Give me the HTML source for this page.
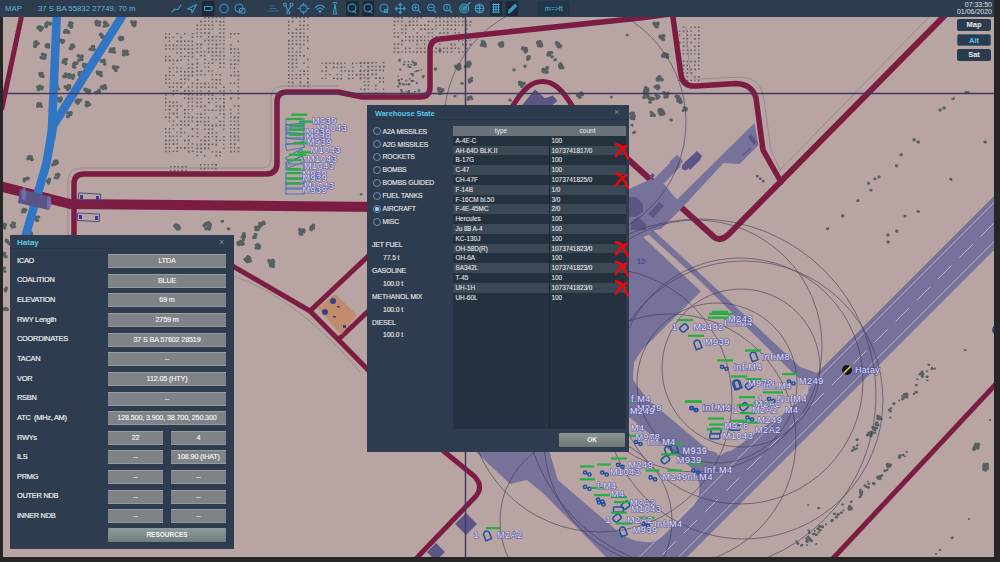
<!DOCTYPE html>
<html><head><meta charset="utf-8">
<style>
*{box-sizing:border-box}
html,body{margin:0;padding:0}
body{transform:translateZ(0);width:1000px;height:562px;overflow:hidden;position:relative;background:#262626;font-family:"Liberation Sans",sans-serif}
#map{position:absolute;left:0;top:0}
#top{position:absolute;left:0;top:0;width:994px;height:17px;background:#2d3d4f;color:#58b4d6;font-size:7.8px}
.tb{position:absolute;top:4px;white-space:nowrap}
.ib{position:absolute;top:1px;width:14px;height:15px;background:#1f2d3d;border-radius:2px}
.btn{position:absolute;left:957px;width:34px;height:12px;background:#2b3b4f;border-radius:2px;color:#e8e8e8;font-size:7.5px;font-weight:bold;text-align:center;line-height:12px}
.panel{position:absolute;background:#2d3d4f;color:#e6e6e6}
.lbl{position:absolute;left:7px;font-size:7.4px;white-space:nowrap;letter-spacing:-0.25px;line-height:9px;color:#ececec;margin-top:-0.8px;-webkit-text-stroke:0.2px #ececec}
.inp{-webkit-text-stroke:0.15px #f4f4f4;position:absolute;height:14px;background:#7f8387;border-top:1px solid #9a9ea2;border-bottom:1px solid #94989c;color:#f4f4f4;font-size:7.2px;text-align:center;line-height:12px;white-space:nowrap;letter-spacing:-0.15px}
.row{position:absolute;left:0;width:173px;height:9.8px;font-size:6.5px;line-height:9.8px;white-space:nowrap}
.row span{position:absolute;top:0}
.wl{-webkit-text-stroke:0.15px #e2e2e2;position:absolute;font-size:6.8px;color:#e2e2e2;white-space:nowrap;letter-spacing:-0.1px;line-height:9px}
.tr{-webkit-text-stroke:0.1px #e4e4e4;position:absolute;font-size:6.4px;color:#e4e4e4;white-space:nowrap;line-height:9.8px}
</style></head><body>
<svg id="map" width="1000" height="562" viewBox="0 0 1000 562">
<defs><clipPath id="mc"><rect x="3" y="17" width="991" height="540"/></clipPath>
<pattern id="dots" x="0" y="0" width="8" height="8" patternUnits="userSpaceOnUse"><rect x="1" y="1" width="1.8" height="1.6" fill="#505058"/><rect x="5" y="1" width="1.6" height="1.8" fill="#505058"/><rect x="1" y="5" width="1.7" height="1.7" fill="#505058"/><rect x="5.2" y="5" width="1.2" height="1.2" fill="#505058"/></pattern>
</defs>
<g clip-path="url(#mc)">
<rect x="0" y="0" width="1000" height="562" fill="#b7a4a3"/>
<path fill="#505258" opacity="0.85" d="M165.0 33.0h1.3v1.5h-1.3zM168.8 33.0h1.3v1.8h-1.3zM176.4 33.0h1.8v1.3h-1.8zM184.0 33.0h1.3v1.3h-1.3zM191.6 33.0h1.8v1.3h-1.8zM165.0 36.8h1.8v1.8h-1.8zM168.8 36.8h1.3v1.8h-1.3zM172.6 36.8h1.3v1.3h-1.3zM180.2 36.8h1.6v1.5h-1.6zM191.6 36.8h1.8v1.3h-1.8zM168.8 40.6h1.3v1.5h-1.3zM176.4 40.6h1.8v1.3h-1.8zM180.2 40.6h1.6v1.8h-1.6zM184.0 40.6h1.6v1.5h-1.6zM187.8 40.6h1.6v1.5h-1.6zM191.6 40.6h1.3v1.8h-1.3zM165.0 44.4h1.3v1.8h-1.3zM168.8 44.4h1.6v1.5h-1.6zM172.6 44.4h1.6v1.8h-1.6zM176.4 44.4h1.3v1.8h-1.3zM180.2 44.4h1.6v1.3h-1.6zM184.0 44.4h1.6v1.3h-1.6zM187.8 44.4h1.3v1.8h-1.3zM191.6 44.4h1.6v1.5h-1.6zM165.0 48.2h1.8v1.5h-1.8zM168.8 48.2h1.6v1.3h-1.6zM172.6 48.2h1.6v1.5h-1.6zM176.4 48.2h1.3v1.3h-1.3zM180.2 48.2h1.6v1.8h-1.6zM184.0 48.2h1.8v1.5h-1.8zM187.8 48.2h1.6v1.8h-1.6zM191.6 48.2h1.6v1.5h-1.6zM176.4 52.0h1.3v1.8h-1.3zM180.2 52.0h1.6v1.5h-1.6zM187.8 52.0h1.8v1.5h-1.8zM191.6 52.0h1.6v1.8h-1.6zM165.0 55.8h1.6v1.5h-1.6zM168.8 55.8h1.6v1.3h-1.6zM180.2 55.8h1.3v1.3h-1.3zM184.0 55.8h1.8v1.3h-1.8zM187.8 55.8h1.3v1.3h-1.3zM191.6 55.8h1.6v1.8h-1.6zM165.0 59.6h1.3v1.8h-1.3zM168.8 59.6h1.8v1.8h-1.8zM172.6 59.6h1.3v1.5h-1.3zM176.4 59.6h1.8v1.8h-1.8zM180.2 59.6h1.6v1.5h-1.6zM187.8 59.6h1.3v1.3h-1.3zM172.6 63.4h1.3v1.3h-1.3zM187.8 63.4h1.3v1.3h-1.3zM191.6 63.4h1.8v1.5h-1.8zM168.8 67.2h1.6v1.8h-1.6zM172.6 67.2h1.3v1.3h-1.3zM176.4 67.2h1.6v1.5h-1.6zM180.2 67.2h1.3v1.3h-1.3zM187.8 67.2h1.6v1.5h-1.6zM191.6 67.2h1.3v1.8h-1.3zM168.8 71.0h1.8v1.5h-1.8zM176.4 71.0h1.3v1.8h-1.3zM180.2 71.0h1.8v1.3h-1.8zM184.0 71.0h1.6v1.8h-1.6zM187.8 71.0h1.3v1.5h-1.3zM191.6 71.0h1.8v1.8h-1.8zM165.0 74.8h1.6v1.8h-1.6zM168.8 74.8h1.3v1.3h-1.3zM172.6 74.8h1.8v1.3h-1.8zM180.2 74.8h1.8v1.3h-1.8zM184.0 74.8h1.6v1.5h-1.6zM187.8 74.8h1.8v1.8h-1.8zM191.6 74.8h1.6v1.8h-1.6zM165.0 78.6h1.6v1.3h-1.6zM168.8 78.6h1.3v1.5h-1.3zM180.2 78.6h1.8v1.3h-1.8zM184.0 78.6h1.8v1.5h-1.8zM187.8 78.6h1.3v1.8h-1.3zM165.0 82.4h1.8v1.3h-1.8zM168.8 82.4h1.3v1.5h-1.3zM172.6 82.4h1.6v1.3h-1.6zM176.4 82.4h1.8v1.5h-1.8zM180.2 82.4h1.8v1.3h-1.8zM184.0 82.4h1.3v1.3h-1.3zM191.6 82.4h1.6v1.8h-1.6zM168.8 86.2h1.6v1.8h-1.6zM172.6 86.2h1.3v1.8h-1.3zM176.4 86.2h1.3v1.3h-1.3zM180.2 86.2h1.8v1.8h-1.8zM187.8 86.2h1.3v1.5h-1.3zM191.6 86.2h1.3v1.3h-1.3zM172.6 90.0h1.8v1.5h-1.8zM176.4 90.0h1.6v1.3h-1.6zM184.0 90.0h1.6v1.8h-1.6zM187.8 90.0h1.8v1.5h-1.8zM191.6 90.0h1.8v1.3h-1.8zM165.0 93.8h1.8v1.8h-1.8zM172.6 93.8h1.3v1.8h-1.3zM180.2 93.8h1.3v1.3h-1.3zM184.0 93.8h1.8v1.3h-1.8zM187.8 93.8h1.6v1.8h-1.6zM191.6 93.8h1.8v1.5h-1.8zM165.0 97.6h1.3v1.8h-1.3zM184.0 97.6h1.3v1.3h-1.3zM187.8 97.6h1.8v1.8h-1.8zM191.6 97.6h1.3v1.8h-1.3zM165.0 101.4h1.8v1.8h-1.8zM168.8 101.4h1.8v1.3h-1.8zM172.6 101.4h1.6v1.8h-1.6zM176.4 101.4h1.3v1.5h-1.3zM187.8 101.4h1.3v1.8h-1.3zM191.6 101.4h1.3v1.3h-1.3zM165.0 105.2h1.3v1.3h-1.3zM168.8 105.2h1.8v1.8h-1.8zM172.6 105.2h1.6v1.3h-1.6zM176.4 105.2h1.3v1.8h-1.3zM180.2 105.2h1.6v1.5h-1.6zM187.8 105.2h1.3v1.3h-1.3zM191.6 105.2h1.8v1.5h-1.8zM165.0 109.0h1.3v1.5h-1.3zM168.8 109.0h1.8v1.5h-1.8zM176.4 109.0h1.6v1.8h-1.6zM184.0 109.0h1.8v1.5h-1.8zM187.8 109.0h1.3v1.3h-1.3zM191.6 109.0h1.3v1.3h-1.3zM168.8 112.8h1.3v1.5h-1.3zM172.6 112.8h1.6v1.8h-1.6zM176.4 112.8h1.6v1.5h-1.6zM184.0 112.8h1.8v1.5h-1.8zM187.8 112.8h1.3v1.5h-1.3zM165.0 116.6h1.6v1.3h-1.6zM168.8 116.6h1.3v1.8h-1.3zM176.4 116.6h1.8v1.3h-1.8zM184.0 116.6h1.6v1.3h-1.6zM187.8 116.6h1.8v1.5h-1.8zM191.6 116.6h1.6v1.8h-1.6zM168.8 120.4h1.3v1.3h-1.3zM172.6 120.4h1.6v1.3h-1.6zM180.2 120.4h1.8v1.5h-1.8zM184.0 120.4h1.3v1.5h-1.3zM187.8 120.4h1.8v1.3h-1.8zM191.6 120.4h1.3v1.5h-1.3zM172.6 124.2h1.3v1.8h-1.3zM176.4 124.2h1.6v1.3h-1.6zM180.2 124.2h1.8v1.5h-1.8zM184.0 124.2h1.8v1.5h-1.8zM187.8 124.2h1.6v1.8h-1.6zM165.0 128.0h1.3v1.8h-1.3zM168.8 128.0h1.3v1.5h-1.3zM172.6 128.0h1.3v1.3h-1.3zM180.2 128.0h1.6v1.5h-1.6zM191.6 128.0h1.8v1.8h-1.8zM165.0 131.8h1.8v1.3h-1.8zM168.8 131.8h1.3v1.5h-1.3zM176.4 131.8h1.3v1.5h-1.3zM180.2 131.8h1.6v1.8h-1.6zM184.0 131.8h1.3v1.5h-1.3zM165.0 135.6h1.3v1.5h-1.3zM168.8 135.6h1.8v1.3h-1.8zM172.6 135.6h1.3v1.3h-1.3zM176.4 135.6h1.3v1.3h-1.3zM180.2 135.6h1.3v1.5h-1.3zM187.8 135.6h1.3v1.3h-1.3zM191.6 135.6h1.8v1.3h-1.8zM165.0 139.4h1.8v1.8h-1.8zM168.8 139.4h1.6v1.8h-1.6zM172.6 139.4h1.3v1.5h-1.3zM176.4 139.4h1.8v1.3h-1.8zM184.0 139.4h1.8v1.8h-1.8zM187.8 139.4h1.8v1.8h-1.8zM165.0 143.2h1.8v1.8h-1.8zM168.8 143.2h1.3v1.8h-1.3zM172.6 143.2h1.8v1.8h-1.8zM176.4 143.2h1.8v1.3h-1.8zM187.8 143.2h1.3v1.5h-1.3zM191.6 143.2h1.8v1.3h-1.8zM165.0 147.0h1.8v1.8h-1.8zM168.8 147.0h1.6v1.5h-1.6zM176.4 147.0h1.8v1.8h-1.8zM180.2 147.0h1.3v1.8h-1.3zM184.0 147.0h1.8v1.8h-1.8zM187.8 147.0h1.3v1.5h-1.3zM191.6 147.0h1.3v1.3h-1.3zM165.0 150.8h1.6v1.5h-1.6zM168.8 150.8h1.3v1.5h-1.3zM172.6 150.8h1.6v1.3h-1.6zM176.4 150.8h1.8v1.3h-1.8zM187.8 150.8h1.8v1.8h-1.8zM191.6 150.8h1.8v1.3h-1.8zM204.1 17.0h1.8v1.3h-1.8zM207.9 17.0h1.8v1.5h-1.8zM211.7 17.0h1.8v1.5h-1.8zM215.5 17.0h1.6v1.3h-1.6zM219.3 17.0h1.8v1.3h-1.8zM223.1 17.0h1.3v1.5h-1.3zM200.3 20.8h1.8v1.5h-1.8zM204.1 20.8h1.6v1.3h-1.6zM207.9 20.8h1.3v1.3h-1.3zM211.7 20.8h1.3v1.8h-1.3zM215.5 20.8h1.6v1.3h-1.6zM219.3 20.8h1.8v1.8h-1.8zM223.1 20.8h1.3v1.8h-1.3zM196.5 24.6h1.6v1.5h-1.6zM200.3 24.6h1.3v1.3h-1.3zM204.1 24.6h1.8v1.5h-1.8zM207.9 24.6h1.8v1.3h-1.8zM211.7 24.6h1.6v1.5h-1.6zM219.3 24.6h1.6v1.5h-1.6zM223.1 24.6h1.3v1.3h-1.3zM196.5 28.4h1.8v1.5h-1.8zM200.3 28.4h1.3v1.5h-1.3zM204.1 28.4h1.8v1.3h-1.8zM207.9 28.4h1.6v1.5h-1.6zM211.7 28.4h1.6v1.3h-1.6zM219.3 28.4h1.8v1.3h-1.8zM223.1 28.4h1.6v1.5h-1.6zM196.5 32.2h1.3v1.5h-1.3zM200.3 32.2h1.6v1.3h-1.6zM204.1 32.2h1.8v1.5h-1.8zM207.9 32.2h1.8v1.8h-1.8zM219.3 32.2h1.6v1.5h-1.6zM223.1 32.2h1.3v1.8h-1.3zM196.5 36.0h1.6v1.3h-1.6zM200.3 36.0h1.8v1.3h-1.8zM207.9 36.0h1.6v1.5h-1.6zM211.7 36.0h1.8v1.8h-1.8zM215.5 36.0h1.8v1.3h-1.8zM219.3 36.0h1.8v1.8h-1.8zM223.1 36.0h1.3v1.8h-1.3zM204.1 39.8h1.6v1.8h-1.6zM207.9 39.8h1.6v1.5h-1.6zM211.7 39.8h1.8v1.3h-1.8zM215.5 39.8h1.3v1.5h-1.3zM219.3 39.8h1.6v1.3h-1.6zM223.1 39.8h1.8v1.3h-1.8zM196.5 43.6h1.8v1.5h-1.8zM200.3 43.6h1.8v1.8h-1.8zM207.9 43.6h1.3v1.5h-1.3zM211.7 43.6h1.6v1.3h-1.6zM215.5 43.6h1.8v1.8h-1.8zM219.3 43.6h1.3v1.3h-1.3zM223.1 43.6h1.3v1.5h-1.3zM196.5 47.4h1.6v1.5h-1.6zM200.3 47.4h1.3v1.3h-1.3zM207.9 47.4h1.6v1.8h-1.6zM211.7 47.4h1.3v1.5h-1.3zM215.5 47.4h1.8v1.5h-1.8zM219.3 47.4h1.3v1.3h-1.3zM223.1 47.4h1.3v1.8h-1.3zM196.5 51.2h1.3v1.8h-1.3zM200.3 51.2h1.6v1.3h-1.6zM204.1 51.2h1.3v1.3h-1.3zM207.9 51.2h1.3v1.8h-1.3zM211.7 51.2h1.8v1.8h-1.8zM215.5 51.2h1.3v1.8h-1.3zM219.3 51.2h1.8v1.5h-1.8zM223.1 51.2h1.3v1.3h-1.3zM200.3 55.0h1.8v1.3h-1.8zM204.1 55.0h1.3v1.8h-1.3zM211.7 55.0h1.6v1.5h-1.6zM215.5 55.0h1.8v1.3h-1.8zM219.3 55.0h1.3v1.8h-1.3zM223.1 55.0h1.6v1.8h-1.6zM196.5 58.8h1.3v1.3h-1.3zM204.1 58.8h1.8v1.5h-1.8zM211.7 58.8h1.6v1.5h-1.6zM215.5 58.8h1.3v1.8h-1.3zM219.3 58.8h1.6v1.5h-1.6zM223.1 58.8h1.3v1.3h-1.3zM196.5 62.6h1.8v1.8h-1.8zM204.1 62.6h1.3v1.5h-1.3zM207.9 62.6h1.3v1.3h-1.3zM211.7 62.6h1.6v1.5h-1.6zM219.3 62.6h1.8v1.3h-1.8zM223.1 62.6h1.6v1.5h-1.6zM196.5 66.4h1.3v1.8h-1.3zM204.1 66.4h1.3v1.3h-1.3zM207.9 66.4h1.3v1.5h-1.3zM219.3 66.4h1.8v1.5h-1.8zM223.1 66.4h1.3v1.3h-1.3zM196.5 70.2h1.3v1.8h-1.3zM200.3 70.2h1.8v1.5h-1.8zM207.9 70.2h1.6v1.5h-1.6zM211.7 70.2h1.6v1.3h-1.6zM196.5 74.0h1.3v1.8h-1.3zM200.3 74.0h1.3v1.5h-1.3zM204.1 74.0h1.6v1.5h-1.6zM211.7 74.0h1.3v1.5h-1.3zM215.5 74.0h1.6v1.3h-1.6zM219.3 74.0h1.8v1.5h-1.8zM196.5 79.0h1.8v1.5h-1.8zM211.7 79.0h1.6v1.3h-1.6zM215.5 79.0h1.8v1.5h-1.8zM219.3 79.0h1.6v1.8h-1.6zM196.5 82.8h1.8v1.5h-1.8zM200.3 82.8h1.6v1.3h-1.6zM204.1 82.8h1.8v1.8h-1.8zM207.9 82.8h1.3v1.3h-1.3zM211.7 82.8h1.3v1.5h-1.3zM215.5 82.8h1.6v1.5h-1.6zM219.3 82.8h1.6v1.5h-1.6zM196.5 86.6h1.3v1.8h-1.3zM200.3 86.6h1.8v1.3h-1.8zM204.1 86.6h1.6v1.5h-1.6zM207.9 86.6h1.8v1.3h-1.8zM211.7 86.6h1.6v1.3h-1.6zM215.5 86.6h1.3v1.8h-1.3zM223.1 86.6h1.6v1.3h-1.6zM196.5 90.4h1.3v1.3h-1.3zM200.3 90.4h1.3v1.3h-1.3zM207.9 90.4h1.8v1.5h-1.8zM219.3 90.4h1.8v1.3h-1.8zM223.1 90.4h1.8v1.3h-1.8zM196.5 94.2h1.6v1.5h-1.6zM200.3 94.2h1.6v1.5h-1.6zM204.1 94.2h1.6v1.3h-1.6zM207.9 94.2h1.3v1.3h-1.3zM211.7 94.2h1.6v1.8h-1.6zM223.1 94.2h1.3v1.8h-1.3zM196.5 98.0h1.8v1.3h-1.8zM200.3 98.0h1.3v1.3h-1.3zM207.9 98.0h1.3v1.5h-1.3zM211.7 98.0h1.3v1.5h-1.3zM215.5 98.0h1.3v1.3h-1.3zM219.3 98.0h1.8v1.3h-1.8zM223.1 98.0h1.6v1.8h-1.6zM196.5 101.8h1.6v1.8h-1.6zM200.3 101.8h1.8v1.3h-1.8zM207.9 101.8h1.8v1.5h-1.8zM215.5 101.8h1.3v1.3h-1.3zM223.1 101.8h1.8v1.8h-1.8zM196.5 105.6h1.3v1.3h-1.3zM200.3 105.6h1.6v1.8h-1.6zM204.1 105.6h1.8v1.5h-1.8zM215.5 105.6h1.6v1.3h-1.6zM219.3 105.6h1.6v1.8h-1.6zM223.1 105.6h1.8v1.8h-1.8zM204.1 109.4h1.6v1.5h-1.6zM207.9 109.4h1.6v1.3h-1.6zM211.7 109.4h1.8v1.5h-1.8zM215.5 109.4h1.3v1.5h-1.3zM219.3 109.4h1.6v1.8h-1.6zM223.1 109.4h1.3v1.5h-1.3zM196.5 113.2h1.6v1.3h-1.6zM200.3 113.2h1.6v1.8h-1.6zM204.1 113.2h1.6v1.3h-1.6zM219.3 113.2h1.6v1.3h-1.6zM223.1 113.2h1.6v1.8h-1.6zM196.5 117.0h1.3v1.5h-1.3zM200.3 117.0h1.8v1.3h-1.8zM204.1 117.0h1.3v1.5h-1.3zM207.9 117.0h1.3v1.5h-1.3zM215.5 117.0h1.6v1.5h-1.6zM223.1 117.0h1.6v1.3h-1.6zM196.5 120.8h1.8v1.8h-1.8zM200.3 120.8h1.3v1.8h-1.3zM204.1 120.8h1.3v1.8h-1.3zM207.9 120.8h1.3v1.5h-1.3zM219.3 120.8h1.8v1.3h-1.8zM223.1 120.8h1.3v1.3h-1.3zM196.5 124.6h1.8v1.3h-1.8zM204.1 124.6h1.8v1.3h-1.8zM207.9 124.6h1.6v1.3h-1.6zM211.7 124.6h1.6v1.8h-1.6zM215.5 124.6h1.6v1.8h-1.6zM219.3 124.6h1.8v1.3h-1.8zM223.1 124.6h1.8v1.5h-1.8zM196.5 128.4h1.6v1.3h-1.6zM204.1 128.4h1.6v1.5h-1.6zM207.9 128.4h1.8v1.5h-1.8zM211.7 128.4h1.6v1.5h-1.6zM223.1 128.4h1.3v1.5h-1.3zM196.5 132.2h1.8v1.3h-1.8zM207.9 132.2h1.6v1.8h-1.6zM211.7 132.2h1.3v1.8h-1.3zM215.5 132.2h1.8v1.3h-1.8zM196.5 136.0h1.8v1.3h-1.8zM204.1 136.0h1.6v1.5h-1.6zM207.9 136.0h1.3v1.8h-1.3zM211.7 136.0h1.3v1.3h-1.3zM215.5 136.0h1.8v1.5h-1.8zM223.1 136.0h1.6v1.5h-1.6zM200.3 139.8h1.6v1.3h-1.6zM204.1 139.8h1.8v1.8h-1.8zM207.9 139.8h1.6v1.3h-1.6zM215.5 139.8h1.8v1.5h-1.8zM219.3 139.8h1.6v1.3h-1.6zM223.1 139.8h1.6v1.3h-1.6zM196.5 143.6h1.3v1.8h-1.3zM200.3 143.6h1.6v1.8h-1.6zM204.1 143.6h1.8v1.3h-1.8zM207.9 143.6h1.8v1.8h-1.8zM211.7 143.6h1.8v1.5h-1.8zM215.5 143.6h1.6v1.8h-1.6zM223.1 143.6h1.3v1.5h-1.3zM196.5 147.4h1.8v1.8h-1.8zM200.3 147.4h1.6v1.8h-1.6zM204.1 147.4h1.8v1.8h-1.8zM207.9 147.4h1.6v1.8h-1.6zM223.1 147.4h1.6v1.5h-1.6zM196.5 151.2h1.3v1.3h-1.3zM200.3 151.2h1.8v1.8h-1.8zM211.7 151.2h1.6v1.3h-1.6zM215.5 151.2h1.8v1.3h-1.8zM219.3 151.2h1.6v1.8h-1.6zM196.5 155.0h1.6v1.3h-1.6zM204.1 155.0h1.3v1.8h-1.3zM215.5 155.0h1.8v1.5h-1.8zM219.3 155.0h1.6v1.3h-1.6zM230.0 33.0h1.6v1.8h-1.6zM233.8 33.0h1.6v1.8h-1.6zM237.6 33.0h1.8v1.5h-1.8zM230.0 36.8h1.3v1.3h-1.3zM237.6 40.6h1.3v1.3h-1.3zM230.0 44.4h1.8v1.3h-1.8zM230.0 48.2h1.8v1.8h-1.8zM233.8 48.2h1.8v1.3h-1.8zM237.6 48.2h1.3v1.5h-1.3zM230.0 52.0h1.8v1.5h-1.8zM233.8 52.0h1.3v1.5h-1.3zM237.6 52.0h1.8v1.5h-1.8zM233.8 55.8h1.3v1.3h-1.3zM237.6 55.8h1.6v1.3h-1.6zM230.0 59.6h1.3v1.5h-1.3zM233.8 59.6h1.8v1.5h-1.8zM237.6 59.6h1.6v1.8h-1.6zM230.0 63.4h1.6v1.8h-1.6zM233.8 63.4h1.8v1.5h-1.8zM237.6 63.4h1.3v1.3h-1.3zM230.0 67.2h1.3v1.3h-1.3zM233.8 67.2h1.3v1.8h-1.3zM233.8 71.0h1.3v1.5h-1.3zM237.6 71.0h1.3v1.5h-1.3zM230.0 74.8h1.8v1.8h-1.8zM233.8 74.8h1.8v1.5h-1.8zM237.6 74.8h1.8v1.8h-1.8zM237.6 78.6h1.3v1.8h-1.3zM230.0 82.4h1.3v1.5h-1.3zM233.8 82.4h1.3v1.8h-1.3zM237.6 82.4h1.3v1.3h-1.3zM237.6 86.2h1.6v1.3h-1.6zM230.0 90.0h1.3v1.3h-1.3zM237.6 90.0h1.3v1.8h-1.3zM237.6 93.8h1.6v1.3h-1.6zM230.0 97.6h1.8v1.8h-1.8zM237.6 97.6h1.8v1.5h-1.8zM233.8 105.2h1.8v1.3h-1.8zM237.6 105.2h1.8v1.8h-1.8zM230.0 109.0h1.3v1.3h-1.3zM237.6 109.0h1.3v1.5h-1.3zM230.0 112.8h1.6v1.5h-1.6zM237.6 112.8h1.6v1.3h-1.6zM230.0 116.6h1.6v1.5h-1.6zM233.8 116.6h1.8v1.8h-1.8zM237.6 116.6h1.6v1.8h-1.6zM230.0 120.4h1.6v1.3h-1.6zM233.8 120.4h1.3v1.5h-1.3zM237.6 120.4h1.3v1.8h-1.3zM230.0 124.2h1.8v1.3h-1.8zM233.8 124.2h1.6v1.3h-1.6zM237.6 124.2h1.8v1.3h-1.8zM230.0 128.0h1.3v1.3h-1.3zM233.8 128.0h1.3v1.5h-1.3zM237.6 128.0h1.3v1.5h-1.3zM230.0 131.8h1.8v1.5h-1.8zM233.8 131.8h1.3v1.5h-1.3zM237.6 131.8h1.8v1.3h-1.8zM230.0 135.6h1.3v1.8h-1.3zM233.8 135.6h1.6v1.8h-1.6zM237.6 135.6h1.3v1.8h-1.3zM230.0 139.4h1.3v1.5h-1.3zM233.8 139.4h1.8v1.3h-1.8zM237.6 139.4h1.8v1.3h-1.8zM230.0 143.2h1.6v1.5h-1.6zM233.8 143.2h1.8v1.8h-1.8zM230.0 147.0h1.8v1.3h-1.8zM233.8 147.0h1.3v1.8h-1.3zM237.6 147.0h1.8v1.8h-1.8zM230.0 150.8h1.6v1.8h-1.6zM233.8 150.8h1.3v1.5h-1.3zM237.6 150.8h1.8v1.5h-1.8zM291.8 17.0h1.6v1.8h-1.6zM295.6 17.0h1.6v1.5h-1.6zM299.4 17.0h1.8v1.3h-1.8zM303.2 17.0h1.6v1.5h-1.6zM307.0 17.0h1.8v1.3h-1.8zM288.0 20.8h1.3v1.8h-1.3zM291.8 20.8h1.8v1.5h-1.8zM299.4 20.8h1.3v1.5h-1.3zM303.2 20.8h1.8v1.3h-1.8zM288.0 24.6h1.3v1.5h-1.3zM299.4 24.6h1.6v1.5h-1.6zM303.2 24.6h1.3v1.8h-1.3zM307.0 24.6h1.6v1.3h-1.6zM288.0 28.4h1.6v1.3h-1.6zM295.6 28.4h1.6v1.8h-1.6zM299.4 28.4h1.8v1.5h-1.8zM303.2 28.4h1.3v1.5h-1.3zM307.0 28.4h1.6v1.3h-1.6zM288.0 32.2h1.6v1.8h-1.6zM291.8 32.2h1.8v1.8h-1.8zM295.6 32.2h1.3v1.8h-1.3zM299.4 32.2h1.8v1.8h-1.8zM303.2 32.2h1.3v1.8h-1.3zM291.8 36.0h1.6v1.8h-1.6zM295.6 36.0h1.6v1.3h-1.6zM299.4 36.0h1.8v1.8h-1.8zM303.2 36.0h1.6v1.5h-1.6zM307.0 36.0h1.3v1.8h-1.3zM288.0 39.8h1.8v1.8h-1.8zM291.8 39.8h1.3v1.8h-1.3zM295.6 39.8h1.3v1.5h-1.3zM299.4 39.8h1.3v1.3h-1.3zM303.2 39.8h1.3v1.3h-1.3zM307.0 39.8h1.3v1.8h-1.3zM288.0 43.6h1.8v1.5h-1.8zM291.8 43.6h1.8v1.5h-1.8zM295.6 43.6h1.8v1.5h-1.8zM299.4 43.6h1.6v1.8h-1.6zM303.2 43.6h1.3v1.8h-1.3zM288.0 47.4h1.3v1.8h-1.3zM291.8 47.4h1.6v1.8h-1.6zM299.4 47.4h1.6v1.3h-1.6zM307.0 47.4h1.6v1.8h-1.6zM288.0 51.2h1.6v1.8h-1.6zM291.8 51.2h1.3v1.5h-1.3zM295.6 51.2h1.8v1.3h-1.8zM299.4 51.2h1.6v1.5h-1.6zM288.0 55.0h1.8v1.3h-1.8zM291.8 55.0h1.8v1.8h-1.8zM295.6 55.0h1.3v1.5h-1.3zM299.4 55.0h1.6v1.5h-1.6zM303.2 55.0h1.8v1.8h-1.8zM288.0 58.8h1.6v1.3h-1.6zM291.8 58.8h1.6v1.8h-1.6zM295.6 58.8h1.6v1.8h-1.6zM307.0 58.8h1.6v1.5h-1.6zM288.0 62.6h1.6v1.5h-1.6zM291.8 62.6h1.6v1.8h-1.6zM295.6 62.6h1.8v1.5h-1.8zM303.2 62.6h1.6v1.3h-1.6zM288.0 66.4h1.6v1.3h-1.6zM291.8 66.4h1.6v1.8h-1.6zM295.6 66.4h1.8v1.3h-1.8zM307.0 66.4h1.8v1.3h-1.8zM288.0 70.2h1.3v1.3h-1.3zM291.8 70.2h1.6v1.3h-1.6zM299.4 70.2h1.8v1.3h-1.8zM303.2 70.2h1.8v1.8h-1.8zM307.0 70.2h1.3v1.8h-1.3zM288.0 74.0h1.8v1.8h-1.8zM291.8 74.0h1.3v1.5h-1.3zM295.6 74.0h1.8v1.3h-1.8zM299.4 74.0h1.6v1.8h-1.6zM303.2 74.0h1.8v1.3h-1.8zM307.0 74.0h1.3v1.3h-1.3zM288.0 77.8h1.8v1.3h-1.8zM291.8 77.8h1.3v1.8h-1.3zM295.6 77.8h1.6v1.3h-1.6zM299.4 77.8h1.8v1.3h-1.8zM307.0 77.8h1.8v1.8h-1.8zM288.0 81.6h1.6v1.5h-1.6zM291.8 81.6h1.6v1.8h-1.6zM299.4 81.6h1.8v1.8h-1.8zM307.0 81.6h1.8v1.8h-1.8zM288.0 85.4h1.6v1.3h-1.6zM291.8 85.4h1.6v1.3h-1.6zM299.4 85.4h1.8v1.3h-1.8zM303.2 85.4h1.8v1.5h-1.8zM307.0 85.4h1.8v1.8h-1.8zM321.5 62.6h1.3v1.5h-1.3zM325.3 62.6h1.6v1.5h-1.6zM329.1 62.6h1.6v1.5h-1.6zM332.9 62.6h1.6v1.5h-1.6zM336.7 62.6h1.6v1.8h-1.6zM340.5 62.6h1.3v1.8h-1.3zM344.3 62.6h1.3v1.5h-1.3zM351.9 62.6h1.3v1.8h-1.3zM355.7 62.6h1.3v1.3h-1.3zM359.5 62.6h1.8v1.5h-1.8zM363.3 62.6h1.3v1.5h-1.3zM367.1 62.6h1.3v1.3h-1.3zM325.3 66.4h1.8v1.8h-1.8zM332.9 66.4h1.8v1.8h-1.8zM336.7 66.4h1.3v1.8h-1.3zM340.5 66.4h1.8v1.8h-1.8zM344.3 66.4h1.3v1.3h-1.3zM351.9 66.4h1.8v1.3h-1.8zM367.1 66.4h1.8v1.3h-1.8zM321.5 70.2h1.3v1.5h-1.3zM325.3 70.2h1.6v1.5h-1.6zM340.5 70.2h1.8v1.3h-1.8zM344.3 70.2h1.8v1.3h-1.8zM348.1 70.2h1.6v1.8h-1.6zM351.9 70.2h1.6v1.5h-1.6zM359.5 70.2h1.8v1.8h-1.8zM363.3 70.2h1.8v1.3h-1.8zM367.1 70.2h1.6v1.8h-1.6zM325.3 74.0h1.3v1.3h-1.3zM329.1 74.0h1.6v1.3h-1.6zM336.7 74.0h1.3v1.3h-1.3zM340.5 74.0h1.3v1.5h-1.3zM348.1 74.0h1.3v1.5h-1.3zM351.9 74.0h1.3v1.3h-1.3zM355.7 74.0h1.8v1.8h-1.8zM359.5 74.0h1.3v1.8h-1.3zM363.3 74.0h1.6v1.8h-1.6zM367.1 74.0h1.6v1.5h-1.6zM321.5 77.8h1.6v1.3h-1.6zM325.3 77.8h1.3v1.3h-1.3zM332.9 77.8h1.8v1.3h-1.8zM336.7 77.8h1.6v1.8h-1.6zM340.5 77.8h1.6v1.8h-1.6zM348.1 77.8h1.8v1.8h-1.8zM351.9 77.8h1.8v1.3h-1.8zM359.5 77.8h1.6v1.8h-1.6zM367.1 77.8h1.6v1.5h-1.6zM170.0 166.0h1.6v1.5h-1.6zM173.8 166.0h1.8v1.5h-1.8zM177.6 166.0h1.3v1.8h-1.3zM181.4 166.0h1.8v1.8h-1.8zM185.2 166.0h1.8v1.8h-1.8zM170.0 169.8h1.3v1.8h-1.3zM173.8 169.8h1.8v1.5h-1.8zM177.6 169.8h1.3v1.5h-1.3zM181.4 169.8h1.6v1.8h-1.6zM185.2 169.8h1.3v1.5h-1.3zM200.0 164.0h1.3v1.5h-1.3zM203.8 164.0h1.6v1.3h-1.6zM207.6 164.0h1.3v1.5h-1.3zM211.4 164.0h1.8v1.3h-1.8zM215.2 164.0h1.8v1.8h-1.8zM200.0 167.8h1.6v1.5h-1.6zM203.8 167.8h1.8v1.8h-1.8zM207.6 167.8h1.6v1.3h-1.6zM211.4 167.8h1.8v1.3h-1.8zM215.2 167.8h1.3v1.8h-1.3zM393.6 17.0h1.8v1.3h-1.8zM397.4 17.0h1.8v1.3h-1.8zM401.2 17.0h1.6v1.8h-1.6zM408.8 17.0h1.3v1.3h-1.3zM412.6 17.0h1.8v1.5h-1.8zM416.4 17.0h1.8v1.5h-1.8zM420.2 17.0h1.8v1.3h-1.8zM435.4 17.0h1.6v1.8h-1.6zM439.2 17.0h1.6v1.8h-1.6zM443.0 17.0h1.3v1.3h-1.3zM446.8 17.0h1.6v1.5h-1.6zM450.6 17.0h1.6v1.8h-1.6zM454.4 17.0h1.3v1.3h-1.3zM458.2 17.0h1.3v1.5h-1.3zM462.0 17.0h1.8v1.3h-1.8zM393.6 20.8h1.8v1.5h-1.8zM397.4 20.8h1.3v1.5h-1.3zM401.2 20.8h1.6v1.5h-1.6zM408.8 20.8h1.8v1.8h-1.8zM412.6 20.8h1.6v1.3h-1.6zM416.4 20.8h1.3v1.5h-1.3zM427.8 20.8h1.8v1.5h-1.8zM431.6 20.8h1.3v1.8h-1.3zM435.4 20.8h1.3v1.8h-1.3zM439.2 20.8h1.6v1.5h-1.6zM443.0 20.8h1.8v1.3h-1.8zM446.8 20.8h1.8v1.8h-1.8zM450.6 20.8h1.6v1.3h-1.6zM454.4 20.8h1.3v1.8h-1.3zM458.2 20.8h1.3v1.5h-1.3zM462.0 20.8h1.3v1.8h-1.3zM465.8 20.8h1.3v1.5h-1.3zM469.6 20.8h1.8v1.8h-1.8zM393.6 24.6h1.6v1.3h-1.6zM401.2 24.6h1.3v1.3h-1.3zM405.0 24.6h1.6v1.8h-1.6zM408.8 24.6h1.8v1.3h-1.8zM412.6 24.6h1.6v1.5h-1.6zM416.4 24.6h1.6v1.5h-1.6zM420.2 24.6h1.6v1.3h-1.6zM424.0 24.6h1.8v1.3h-1.8zM427.8 24.6h1.3v1.3h-1.3zM435.4 24.6h1.3v1.8h-1.3zM439.2 24.6h1.8v1.3h-1.8zM443.0 24.6h1.3v1.5h-1.3zM446.8 24.6h1.8v1.3h-1.8zM450.6 24.6h1.6v1.5h-1.6zM454.4 24.6h1.6v1.3h-1.6zM458.2 24.6h1.3v1.5h-1.3zM462.0 24.6h1.3v1.3h-1.3zM465.8 24.6h1.8v1.3h-1.8zM469.6 24.6h1.3v1.5h-1.3zM393.6 28.4h1.3v1.3h-1.3zM401.2 28.4h1.6v1.5h-1.6zM405.0 28.4h1.6v1.5h-1.6zM412.6 28.4h1.6v1.3h-1.6zM420.2 28.4h1.8v1.8h-1.8zM424.0 28.4h1.8v1.5h-1.8zM427.8 28.4h1.3v1.5h-1.3zM431.6 28.4h1.6v1.5h-1.6zM435.4 28.4h1.3v1.3h-1.3zM443.0 28.4h1.3v1.3h-1.3zM446.8 28.4h1.6v1.3h-1.6zM450.6 28.4h1.3v1.5h-1.3zM454.4 28.4h1.6v1.8h-1.6zM465.8 28.4h1.8v1.5h-1.8zM393.6 32.2h1.6v1.3h-1.6zM397.4 32.2h1.3v1.3h-1.3zM401.2 32.2h1.8v1.3h-1.8zM405.0 32.2h1.3v1.8h-1.3zM416.4 32.2h1.6v1.5h-1.6zM427.8 32.2h1.8v1.3h-1.8zM431.6 32.2h1.3v1.3h-1.3zM439.2 32.2h1.6v1.8h-1.6zM443.0 32.2h1.8v1.5h-1.8zM446.8 32.2h1.8v1.5h-1.8zM454.4 32.2h1.6v1.3h-1.6zM458.2 32.2h1.6v1.3h-1.6zM465.8 32.2h1.6v1.3h-1.6zM393.6 36.0h1.8v1.3h-1.8zM397.4 36.0h1.6v1.8h-1.6zM405.0 36.0h1.3v1.5h-1.3zM408.8 36.0h1.6v1.8h-1.6zM412.6 36.0h1.3v1.5h-1.3zM416.4 36.0h1.8v1.5h-1.8zM420.2 36.0h1.3v1.8h-1.3zM424.0 36.0h1.3v1.3h-1.3zM427.8 36.0h1.3v1.3h-1.3zM431.6 36.0h1.3v1.3h-1.3zM435.4 36.0h1.8v1.3h-1.8zM443.0 36.0h1.8v1.3h-1.8zM446.8 36.0h1.8v1.8h-1.8zM450.6 36.0h1.8v1.3h-1.8zM454.4 36.0h1.3v1.5h-1.3zM458.2 36.0h1.8v1.3h-1.8zM469.6 36.0h1.8v1.5h-1.8zM401.2 39.8h1.8v1.8h-1.8zM405.0 39.8h1.3v1.3h-1.3zM408.8 39.8h1.6v1.8h-1.6zM412.6 39.8h1.3v1.8h-1.3zM416.4 39.8h1.6v1.8h-1.6zM420.2 39.8h1.8v1.3h-1.8zM424.0 39.8h1.3v1.5h-1.3zM427.8 39.8h1.3v1.5h-1.3zM431.6 39.8h1.8v1.5h-1.8zM435.4 39.8h1.8v1.3h-1.8zM439.2 39.8h1.3v1.8h-1.3zM443.0 39.8h1.3v1.5h-1.3zM446.8 39.8h1.3v1.5h-1.3zM458.2 39.8h1.3v1.8h-1.3zM462.0 39.8h1.3v1.3h-1.3zM465.8 39.8h1.6v1.5h-1.6zM469.6 39.8h1.3v1.3h-1.3zM393.6 43.6h1.8v1.5h-1.8zM397.4 43.6h1.8v1.5h-1.8zM401.2 43.6h1.3v1.8h-1.3zM416.4 43.6h1.3v1.5h-1.3zM424.0 43.6h1.3v1.3h-1.3zM431.6 43.6h1.8v1.5h-1.8zM439.2 43.6h1.3v1.5h-1.3zM450.6 43.6h1.6v1.8h-1.6zM454.4 43.6h1.3v1.8h-1.3zM462.0 43.6h1.6v1.8h-1.6zM465.8 43.6h1.3v1.8h-1.3zM469.6 43.6h1.8v1.8h-1.8zM393.6 47.4h1.8v1.5h-1.8zM397.4 47.4h1.6v1.5h-1.6zM405.0 47.4h1.3v1.8h-1.3zM408.8 47.4h1.8v1.5h-1.8zM416.4 47.4h1.3v1.5h-1.3zM420.2 47.4h1.6v1.5h-1.6zM424.0 47.4h1.3v1.5h-1.3zM435.4 47.4h1.8v1.5h-1.8zM439.2 47.4h1.3v1.8h-1.3zM443.0 47.4h1.6v1.5h-1.6zM446.8 47.4h1.3v1.8h-1.3zM450.6 47.4h1.8v1.8h-1.8zM454.4 47.4h1.6v1.5h-1.6zM458.2 47.4h1.3v1.8h-1.3zM465.8 47.4h1.6v1.8h-1.6zM393.6 51.2h1.6v1.5h-1.6zM397.4 51.2h1.8v1.8h-1.8zM401.2 51.2h1.3v1.5h-1.3zM405.0 51.2h1.3v1.5h-1.3zM408.8 51.2h1.8v1.3h-1.8zM412.6 51.2h1.8v1.3h-1.8zM416.4 51.2h1.6v1.8h-1.6zM420.2 51.2h1.6v1.5h-1.6zM424.0 51.2h1.6v1.8h-1.6zM427.8 51.2h1.6v1.5h-1.6zM431.6 51.2h1.8v1.5h-1.8zM435.4 51.2h1.3v1.8h-1.3zM439.2 51.2h1.6v1.5h-1.6zM443.0 51.2h1.3v1.8h-1.3zM446.8 51.2h1.3v1.5h-1.3zM450.6 51.2h1.8v1.3h-1.8zM458.2 51.2h1.6v1.8h-1.6zM462.0 51.2h1.6v1.3h-1.6zM465.8 51.2h1.3v1.3h-1.3zM360.0 62.0h1.6v1.5h-1.6zM363.8 62.0h1.6v1.8h-1.6zM367.6 62.0h1.6v1.8h-1.6zM371.4 62.0h1.8v1.8h-1.8zM375.2 62.0h1.6v1.5h-1.6zM382.8 62.0h1.6v1.3h-1.6zM360.0 65.8h1.8v1.3h-1.8zM367.6 65.8h1.6v1.8h-1.6zM371.4 65.8h1.8v1.3h-1.8zM375.2 65.8h1.6v1.5h-1.6zM379.0 65.8h1.8v1.8h-1.8zM382.8 65.8h1.8v1.8h-1.8zM360.0 69.6h1.3v1.5h-1.3zM363.8 69.6h1.3v1.5h-1.3zM367.6 69.6h1.3v1.8h-1.3zM371.4 69.6h1.8v1.5h-1.8zM375.2 69.6h1.8v1.5h-1.8zM379.0 69.6h1.8v1.5h-1.8zM382.8 69.6h1.3v1.8h-1.3zM360.0 73.4h1.6v1.3h-1.6zM367.6 73.4h1.3v1.5h-1.3zM371.4 73.4h1.8v1.8h-1.8zM375.2 73.4h1.8v1.5h-1.8zM360.0 77.2h1.8v1.3h-1.8zM363.8 77.2h1.6v1.3h-1.6zM367.6 77.2h1.8v1.3h-1.8zM375.2 77.2h1.8v1.8h-1.8zM379.0 77.2h1.8v1.8h-1.8zM382.8 77.2h1.3v1.8h-1.3zM363.8 81.0h1.3v1.3h-1.3zM367.6 81.0h1.8v1.3h-1.8zM379.0 81.0h1.6v1.5h-1.6zM382.8 81.0h1.3v1.8h-1.3zM363.8 84.8h1.6v1.3h-1.6zM367.6 84.8h1.6v1.5h-1.6zM375.2 84.8h1.3v1.8h-1.3zM360.0 88.6h1.3v1.3h-1.3zM363.8 88.6h1.6v1.8h-1.6zM367.6 88.6h1.3v1.5h-1.3zM375.2 88.6h1.3v1.3h-1.3zM382.8 88.6h1.3v1.5h-1.3zM363.8 92.4h1.6v1.5h-1.6zM367.6 92.4h1.6v1.5h-1.6zM371.4 92.4h1.3v1.3h-1.3zM375.2 92.4h1.8v1.8h-1.8zM379.0 92.4h1.6v1.5h-1.6zM382.8 92.4h1.8v1.5h-1.8zM682.8 26.6h1.3v1.3h-1.3zM690.4 26.6h1.3v1.5h-1.3zM694.2 26.6h1.6v1.3h-1.6zM698.0 26.6h1.6v1.5h-1.6zM679.0 30.4h1.3v1.3h-1.3zM682.8 30.4h1.6v1.8h-1.6zM686.6 30.4h1.3v1.5h-1.3zM690.4 30.4h1.3v1.5h-1.3zM698.0 30.4h1.6v1.3h-1.6zM679.0 34.2h1.3v1.3h-1.3zM686.6 34.2h1.3v1.8h-1.3zM690.4 34.2h1.3v1.3h-1.3zM694.2 34.2h1.3v1.8h-1.3zM698.0 34.2h1.8v1.8h-1.8zM682.8 38.0h1.8v1.3h-1.8zM686.6 38.0h1.6v1.8h-1.6zM694.2 38.0h1.6v1.8h-1.6zM698.0 38.0h1.8v1.5h-1.8zM679.0 41.8h1.6v1.8h-1.6zM682.8 41.8h1.3v1.3h-1.3zM686.6 41.8h1.3v1.8h-1.3zM690.4 41.8h1.8v1.5h-1.8zM698.0 41.8h1.3v1.5h-1.3zM682.8 45.6h1.8v1.3h-1.8zM686.6 45.6h1.3v1.5h-1.3zM694.2 45.6h1.3v1.8h-1.3zM698.0 45.6h1.8v1.5h-1.8zM682.8 49.4h1.3v1.3h-1.3zM686.6 49.4h1.8v1.5h-1.8zM690.4 49.4h1.6v1.5h-1.6zM694.2 49.4h1.8v1.3h-1.8zM698.0 49.4h1.3v1.3h-1.3zM679.0 53.2h1.8v1.8h-1.8zM682.8 53.2h1.6v1.3h-1.6zM686.6 53.2h1.8v1.5h-1.8zM690.4 53.2h1.6v1.5h-1.6zM694.2 53.2h1.3v1.3h-1.3zM698.0 53.2h1.6v1.8h-1.6zM679.0 57.0h1.8v1.8h-1.8zM698.0 57.0h1.6v1.8h-1.6zM682.8 60.8h1.8v1.3h-1.8zM686.6 60.8h1.3v1.8h-1.3zM690.4 60.8h1.8v1.5h-1.8zM694.2 60.8h1.8v1.8h-1.8zM698.0 60.8h1.3v1.3h-1.3zM679.0 64.6h1.8v1.5h-1.8zM682.8 64.6h1.8v1.8h-1.8zM686.6 64.6h1.3v1.8h-1.3zM694.2 64.6h1.3v1.5h-1.3zM698.0 64.6h1.3v1.5h-1.3zM679.0 68.4h1.6v1.8h-1.6zM682.8 68.4h1.3v1.5h-1.3zM686.6 68.4h1.6v1.5h-1.6zM690.4 68.4h1.6v1.8h-1.6zM694.2 68.4h1.8v1.8h-1.8zM698.0 68.4h1.8v1.3h-1.8zM679.0 72.2h1.3v1.5h-1.3zM682.8 72.2h1.3v1.5h-1.3zM686.6 72.2h1.3v1.8h-1.3zM690.4 72.2h1.8v1.5h-1.8zM679.0 76.0h1.3v1.8h-1.3zM682.8 76.0h1.3v1.3h-1.3zM686.6 76.0h1.6v1.3h-1.6zM694.2 76.0h1.3v1.8h-1.3zM698.0 76.0h1.8v1.5h-1.8zM679.0 79.8h1.3v1.3h-1.3zM682.8 79.8h1.6v1.3h-1.6zM686.6 79.8h1.6v1.8h-1.6zM690.4 79.8h1.8v1.3h-1.8zM694.2 79.8h1.3v1.5h-1.3zM698.0 79.8h1.3v1.8h-1.3z"/>
<g fill="#4f5c5d" opacity="0.92">
<circle cx="46.2" cy="26.0" r="1.8"/>
<circle cx="46.0" cy="24.0" r="1.8"/>
<circle cx="50.4" cy="23.6" r="1.8"/>
<circle cx="46.1" cy="26.4" r="1.8"/>
<circle cx="50.4" cy="24.0" r="1.8"/>
<circle cx="47.4" cy="22.9" r="1.8"/>
<circle cx="48.0" cy="24.0" r="1.8"/>
<circle cx="65.5" cy="30.7" r="1.8"/>
<circle cx="68.6" cy="32.2" r="1.8"/>
<circle cx="65.2" cy="30.7" r="1.8"/>
<circle cx="66.5" cy="30.5" r="1.8"/>
<circle cx="64.7" cy="32.3" r="1.8"/>
<circle cx="68.1" cy="32.5" r="1.8"/>
<circle cx="68.2" cy="31.7" r="1.8"/>
<circle cx="60.1" cy="40.1" r="1.8"/>
<circle cx="63.6" cy="41.0" r="1.8"/>
<circle cx="62.4" cy="42.4" r="1.8"/>
<circle cx="62.8" cy="40.9" r="1.8"/>
<circle cx="59.4" cy="40.7" r="1.8"/>
<circle cx="59.1" cy="41.1" r="1.8"/>
<circle cx="60.9" cy="40.4" r="1.8"/>
<circle cx="48.1" cy="44.9" r="1.8"/>
<circle cx="48.0" cy="44.9" r="1.8"/>
<circle cx="47.6" cy="45.0" r="1.8"/>
<circle cx="47.9" cy="45.0" r="1.8"/>
<circle cx="46.5" cy="45.4" r="1.8"/>
<circle cx="46.7" cy="46.7" r="1.8"/>
<circle cx="48.6" cy="46.9" r="1.8"/>
<circle cx="42.5" cy="54.2" r="1.8"/>
<circle cx="45.4" cy="55.1" r="1.8"/>
<circle cx="44.0" cy="57.7" r="1.8"/>
<circle cx="41.2" cy="57.6" r="1.8"/>
<circle cx="44.0" cy="58.2" r="1.8"/>
<circle cx="44.5" cy="55.1" r="1.8"/>
<circle cx="44.8" cy="57.9" r="1.8"/>
<circle cx="64.6" cy="61.6" r="1.8"/>
<circle cx="65.7" cy="63.6" r="1.8"/>
<circle cx="63.3" cy="62.4" r="1.8"/>
<circle cx="64.7" cy="59.8" r="1.8"/>
<circle cx="63.8" cy="60.6" r="1.8"/>
<circle cx="66.1" cy="59.6" r="1.8"/>
<circle cx="66.1" cy="59.7" r="1.8"/>
<circle cx="86.5" cy="66.9" r="1.8"/>
<circle cx="85.1" cy="67.2" r="1.8"/>
<circle cx="83.6" cy="64.6" r="1.8"/>
<circle cx="86.1" cy="64.9" r="1.8"/>
<circle cx="84.0" cy="66.2" r="1.8"/>
<circle cx="83.8" cy="64.6" r="1.8"/>
<circle cx="85.2" cy="65.3" r="1.8"/>
<circle cx="41.3" cy="76.1" r="1.8"/>
<circle cx="41.2" cy="74.3" r="1.8"/>
<circle cx="42.0" cy="73.5" r="1.8"/>
<circle cx="42.8" cy="76.4" r="1.8"/>
<circle cx="40.7" cy="75.4" r="1.8"/>
<circle cx="39.9" cy="73.6" r="1.8"/>
<circle cx="42.2" cy="76.0" r="1.8"/>
<circle cx="65.9" cy="76.4" r="1.8"/>
<circle cx="66.7" cy="75.1" r="1.8"/>
<circle cx="65.6" cy="74.0" r="1.8"/>
<circle cx="64.2" cy="76.7" r="1.8"/>
<circle cx="64.4" cy="76.5" r="1.8"/>
<circle cx="67.3" cy="75.2" r="1.8"/>
<circle cx="64.2" cy="76.0" r="1.8"/>
<circle cx="71.5" cy="76.3" r="1.8"/>
<circle cx="69.4" cy="74.6" r="1.8"/>
<circle cx="73.5" cy="75.3" r="1.8"/>
<circle cx="72.7" cy="78.3" r="1.8"/>
<circle cx="72.4" cy="75.7" r="1.8"/>
<circle cx="69.2" cy="77.5" r="1.8"/>
<circle cx="73.6" cy="76.0" r="1.8"/>
<circle cx="56.8" cy="86.2" r="1.8"/>
<circle cx="55.1" cy="89.0" r="1.8"/>
<circle cx="54.5" cy="87.9" r="1.8"/>
<circle cx="58.5" cy="89.0" r="1.8"/>
<circle cx="56.7" cy="85.3" r="1.8"/>
<circle cx="54.9" cy="89.0" r="1.8"/>
<circle cx="54.3" cy="87.1" r="1.8"/>
<circle cx="66.8" cy="87.0" r="1.8"/>
<circle cx="69.4" cy="88.0" r="1.8"/>
<circle cx="68.7" cy="85.5" r="1.8"/>
<circle cx="67.6" cy="89.4" r="1.8"/>
<circle cx="68.3" cy="87.1" r="1.8"/>
<circle cx="69.7" cy="85.8" r="1.8"/>
<circle cx="65.3" cy="86.9" r="1.8"/>
<circle cx="38.5" cy="89.5" r="1.8"/>
<circle cx="37.9" cy="87.1" r="1.8"/>
<circle cx="38.8" cy="88.6" r="1.8"/>
<circle cx="42.2" cy="87.4" r="1.8"/>
<circle cx="39.4" cy="87.8" r="1.8"/>
<circle cx="40.0" cy="86.4" r="1.8"/>
<circle cx="41.8" cy="88.7" r="1.8"/>
<circle cx="57.0" cy="99.4" r="1.8"/>
<circle cx="60.9" cy="98.1" r="1.8"/>
<circle cx="59.1" cy="100.9" r="1.8"/>
<circle cx="57.9" cy="98.6" r="1.8"/>
<circle cx="61.0" cy="99.6" r="1.8"/>
<circle cx="60.5" cy="101.0" r="1.8"/>
<circle cx="57.6" cy="99.0" r="1.8"/>
<circle cx="76.3" cy="102.0" r="1.8"/>
<circle cx="77.6" cy="100.0" r="1.8"/>
<circle cx="80.6" cy="100.0" r="1.8"/>
<circle cx="78.6" cy="101.5" r="1.8"/>
<circle cx="76.5" cy="100.9" r="1.8"/>
<circle cx="79.2" cy="100.5" r="1.8"/>
<circle cx="77.9" cy="103.2" r="1.8"/>
<circle cx="40.0" cy="104.5" r="1.8"/>
<circle cx="38.0" cy="104.9" r="1.8"/>
<circle cx="38.9" cy="105.6" r="1.8"/>
<circle cx="38.3" cy="103.7" r="1.8"/>
<circle cx="37.8" cy="106.2" r="1.8"/>
<circle cx="41.2" cy="106.2" r="1.8"/>
<circle cx="40.2" cy="103.8" r="1.8"/>
<circle cx="89.5" cy="90.6" r="1.8"/>
<circle cx="87.2" cy="92.3" r="1.8"/>
<circle cx="88.2" cy="92.4" r="1.8"/>
<circle cx="85.1" cy="89.3" r="1.8"/>
<circle cx="89.5" cy="92.9" r="1.8"/>
<circle cx="85.3" cy="90.1" r="1.8"/>
<circle cx="87.2" cy="90.0" r="1.8"/>
<circle cx="68.0" cy="116.7" r="1.8"/>
<circle cx="69.9" cy="114.0" r="1.8"/>
<circle cx="70.4" cy="113.1" r="1.8"/>
<circle cx="68.0" cy="113.0" r="1.8"/>
<circle cx="71.0" cy="112.7" r="1.8"/>
<circle cx="67.6" cy="116.3" r="1.8"/>
<circle cx="70.8" cy="114.5" r="1.8"/>
<circle cx="90.2" cy="49.2" r="1.8"/>
<circle cx="93.6" cy="46.6" r="1.8"/>
<circle cx="91.2" cy="49.2" r="1.8"/>
<circle cx="93.6" cy="49.6" r="1.8"/>
<circle cx="92.6" cy="46.6" r="1.8"/>
<circle cx="93.8" cy="49.2" r="1.8"/>
<circle cx="92.5" cy="48.0" r="1.8"/>
<circle cx="101.1" cy="34.2" r="1.8"/>
<circle cx="100.4" cy="34.8" r="1.8"/>
<circle cx="104.1" cy="37.1" r="1.8"/>
<circle cx="102.2" cy="35.7" r="1.8"/>
<circle cx="104.2" cy="38.1" r="1.8"/>
<circle cx="100.8" cy="34.5" r="1.8"/>
<circle cx="102.3" cy="37.3" r="1.8"/>
<circle cx="107.3" cy="25.4" r="1.8"/>
<circle cx="106.5" cy="25.1" r="1.8"/>
<circle cx="104.6" cy="22.9" r="1.8"/>
<circle cx="105.8" cy="22.7" r="1.8"/>
<circle cx="107.6" cy="24.8" r="1.8"/>
<circle cx="104.3" cy="26.3" r="1.8"/>
<circle cx="104.7" cy="22.4" r="1.8"/>
<circle cx="120.6" cy="39.8" r="1.8"/>
<circle cx="122.5" cy="37.7" r="1.8"/>
<circle cx="120.0" cy="37.6" r="1.8"/>
<circle cx="120.8" cy="38.6" r="1.8"/>
<circle cx="119.4" cy="38.4" r="1.8"/>
<circle cx="122.3" cy="37.8" r="1.8"/>
<circle cx="122.3" cy="39.2" r="1.8"/>
<circle cx="110.6" cy="50.1" r="1.8"/>
<circle cx="110.3" cy="51.5" r="1.8"/>
<circle cx="114.4" cy="52.1" r="1.8"/>
<circle cx="111.2" cy="49.1" r="1.8"/>
<circle cx="111.6" cy="50.6" r="1.8"/>
<circle cx="113.8" cy="48.8" r="1.8"/>
<circle cx="112.4" cy="51.4" r="1.8"/>
<circle cx="104.8" cy="64.1" r="1.8"/>
<circle cx="103.9" cy="61.3" r="1.8"/>
<circle cx="103.9" cy="60.4" r="1.8"/>
<circle cx="101.2" cy="60.8" r="1.8"/>
<circle cx="101.9" cy="61.3" r="1.8"/>
<circle cx="102.0" cy="61.5" r="1.8"/>
<circle cx="103.4" cy="61.4" r="1.8"/>
<circle cx="98.9" cy="72.5" r="1.8"/>
<circle cx="101.1" cy="75.7" r="1.8"/>
<circle cx="100.5" cy="74.1" r="1.8"/>
<circle cx="100.7" cy="72.5" r="1.8"/>
<circle cx="97.9" cy="73.8" r="1.8"/>
<circle cx="97.3" cy="72.1" r="1.8"/>
<circle cx="99.9" cy="73.9" r="1.8"/>
<circle cx="134.6" cy="23.6" r="1.8"/>
<circle cx="135.2" cy="22.1" r="1.8"/>
<circle cx="134.7" cy="25.1" r="1.8"/>
<circle cx="133.0" cy="24.8" r="1.8"/>
<circle cx="131.7" cy="21.7" r="1.8"/>
<circle cx="134.3" cy="25.6" r="1.8"/>
<circle cx="132.7" cy="22.9" r="1.8"/>
<circle cx="113.7" cy="67.0" r="1.8"/>
<circle cx="114.0" cy="67.2" r="1.8"/>
<circle cx="115.8" cy="67.4" r="1.8"/>
<circle cx="114.4" cy="68.6" r="1.8"/>
<circle cx="113.4" cy="67.1" r="1.8"/>
<circle cx="117.7" cy="67.2" r="1.8"/>
<circle cx="115.8" cy="70.5" r="1.8"/>
<circle cx="127.5" cy="54.2" r="1.8"/>
<circle cx="125.8" cy="52.0" r="1.8"/>
<circle cx="123.7" cy="51.3" r="1.8"/>
<circle cx="123.5" cy="54.5" r="1.8"/>
<circle cx="126.6" cy="51.8" r="1.8"/>
<circle cx="126.8" cy="51.2" r="1.8"/>
<circle cx="124.1" cy="54.8" r="1.8"/>
<circle cx="73.7" cy="46.8" r="1.8"/>
<circle cx="71.9" cy="45.3" r="1.8"/>
<circle cx="71.7" cy="45.4" r="1.8"/>
<circle cx="72.1" cy="45.8" r="1.8"/>
<circle cx="70.2" cy="48.4" r="1.8"/>
<circle cx="71.4" cy="48.6" r="1.8"/>
<circle cx="72.9" cy="45.2" r="1.8"/>
<circle cx="74.6" cy="63.4" r="1.8"/>
<circle cx="74.0" cy="66.5" r="1.8"/>
<circle cx="73.9" cy="64.3" r="1.8"/>
<circle cx="73.4" cy="66.5" r="1.8"/>
<circle cx="75.8" cy="63.8" r="1.8"/>
<circle cx="74.5" cy="67.3" r="1.8"/>
<circle cx="76.7" cy="63.1" r="1.8"/>
<circle cx="81.8" cy="56.6" r="1.8"/>
<circle cx="80.5" cy="56.6" r="1.8"/>
<circle cx="81.8" cy="59.5" r="1.8"/>
<circle cx="79.0" cy="60.2" r="1.8"/>
<circle cx="81.3" cy="59.2" r="1.8"/>
<circle cx="78.4" cy="55.9" r="1.8"/>
<circle cx="82.2" cy="56.0" r="1.8"/>
<circle cx="81.5" cy="72.5" r="1.8"/>
<circle cx="79.4" cy="73.8" r="1.8"/>
<circle cx="79.4" cy="75.0" r="1.8"/>
<circle cx="79.3" cy="72.7" r="1.8"/>
<circle cx="81.0" cy="74.0" r="1.8"/>
<circle cx="83.6" cy="73.7" r="1.8"/>
<circle cx="82.8" cy="73.2" r="1.8"/>
<circle cx="88.7" cy="104.4" r="1.8"/>
<circle cx="86.3" cy="105.3" r="1.8"/>
<circle cx="86.5" cy="102.3" r="1.8"/>
<circle cx="87.3" cy="105.8" r="1.8"/>
<circle cx="88.3" cy="102.9" r="1.8"/>
<circle cx="86.9" cy="105.1" r="1.8"/>
<circle cx="89.5" cy="104.5" r="1.8"/>
<circle cx="98.6" cy="91.8" r="1.8"/>
<circle cx="98.2" cy="92.0" r="1.8"/>
<circle cx="95.5" cy="92.7" r="1.8"/>
<circle cx="98.9" cy="92.5" r="1.8"/>
<circle cx="99.1" cy="90.2" r="1.8"/>
<circle cx="97.9" cy="91.7" r="1.8"/>
<circle cx="99.3" cy="91.7" r="1.8"/>
<circle cx="105.5" cy="88.2" r="1.8"/>
<circle cx="101.4" cy="87.1" r="1.8"/>
<circle cx="103.0" cy="86.9" r="1.8"/>
<circle cx="104.8" cy="85.6" r="1.8"/>
<circle cx="103.0" cy="88.4" r="1.8"/>
<circle cx="102.2" cy="87.2" r="1.8"/>
<circle cx="104.9" cy="87.1" r="1.8"/>
<circle cx="42.1" cy="27.7" r="1.8"/>
<circle cx="39.3" cy="27.1" r="1.8"/>
<circle cx="40.7" cy="30.2" r="1.8"/>
<circle cx="42.0" cy="27.9" r="1.8"/>
<circle cx="39.8" cy="27.1" r="1.8"/>
<circle cx="38.5" cy="28.3" r="1.8"/>
<circle cx="38.2" cy="27.6" r="1.8"/>
<circle cx="36.0" cy="41.9" r="1.8"/>
<circle cx="35.4" cy="46.4" r="1.8"/>
<circle cx="34.7" cy="46.0" r="1.8"/>
<circle cx="35.7" cy="44.3" r="1.8"/>
<circle cx="35.0" cy="42.8" r="1.8"/>
<circle cx="36.8" cy="43.6" r="1.8"/>
<circle cx="38.0" cy="43.6" r="1.8"/>
<circle cx="96.7" cy="21.4" r="1.8"/>
<circle cx="95.9" cy="22.3" r="1.8"/>
<circle cx="99.0" cy="24.8" r="1.8"/>
<circle cx="99.6" cy="22.1" r="1.8"/>
<circle cx="96.6" cy="24.8" r="1.8"/>
<circle cx="98.8" cy="23.5" r="1.8"/>
<circle cx="99.2" cy="25.2" r="1.8"/>
<circle cx="69.8" cy="22.7" r="1.8"/>
<circle cx="72.0" cy="23.2" r="1.8"/>
<circle cx="69.2" cy="25.3" r="1.8"/>
<circle cx="71.1" cy="26.1" r="1.8"/>
<circle cx="71.2" cy="27.3" r="1.8"/>
<circle cx="71.4" cy="26.2" r="1.8"/>
<circle cx="71.1" cy="23.3" r="1.8"/>
<circle cx="31.2" cy="156.8" r="1.8"/>
<circle cx="29.6" cy="158.1" r="1.8"/>
<circle cx="29.2" cy="156.9" r="1.8"/>
<circle cx="29.0" cy="157.1" r="1.8"/>
<circle cx="31.0" cy="158.9" r="1.8"/>
<circle cx="32.0" cy="159.4" r="1.8"/>
<circle cx="27.9" cy="158.7" r="1.8"/>
<circle cx="55.0" cy="163.9" r="1.8"/>
<circle cx="52.7" cy="164.8" r="1.8"/>
<circle cx="56.8" cy="161.2" r="1.8"/>
<circle cx="54.4" cy="162.1" r="1.8"/>
<circle cx="55.1" cy="161.4" r="1.8"/>
<circle cx="55.5" cy="162.8" r="1.8"/>
<circle cx="57.1" cy="162.9" r="1.8"/>
<circle cx="55.0" cy="177.7" r="1.5"/>
<circle cx="56.1" cy="174.8" r="1.5"/>
<circle cx="58.7" cy="176.0" r="1.5"/>
<circle cx="59.0" cy="174.7" r="1.5"/>
<circle cx="57.4" cy="177.9" r="1.5"/>
<circle cx="57.5" cy="175.0" r="1.5"/>
<circle cx="58.1" cy="174.1" r="1.5"/>
<circle cx="26.2" cy="178.6" r="1.6"/>
<circle cx="24.2" cy="180.9" r="1.6"/>
<circle cx="26.6" cy="179.0" r="1.6"/>
<circle cx="28.1" cy="178.4" r="1.6"/>
<circle cx="27.7" cy="178.2" r="1.6"/>
<circle cx="27.4" cy="179.0" r="1.6"/>
<circle cx="24.0" cy="179.1" r="1.6"/>
<circle cx="49.7" cy="179.7" r="1.6"/>
<circle cx="49.3" cy="179.1" r="1.6"/>
<circle cx="47.2" cy="181.1" r="1.6"/>
<circle cx="48.8" cy="182.8" r="1.6"/>
<circle cx="48.4" cy="183.0" r="1.6"/>
<circle cx="49.2" cy="180.4" r="1.6"/>
<circle cx="48.8" cy="180.0" r="1.6"/>
<circle cx="25.7" cy="209.9" r="1.6"/>
<circle cx="24.5" cy="211.8" r="1.6"/>
<circle cx="23.6" cy="210.8" r="1.6"/>
<circle cx="23.4" cy="209.2" r="1.6"/>
<circle cx="25.3" cy="209.9" r="1.6"/>
<circle cx="22.3" cy="211.8" r="1.6"/>
<circle cx="24.5" cy="210.0" r="1.6"/>
<circle cx="36.6" cy="217.5" r="1.6"/>
<circle cx="38.7" cy="217.0" r="1.6"/>
<circle cx="36.0" cy="219.2" r="1.6"/>
<circle cx="37.7" cy="220.5" r="1.6"/>
<circle cx="36.6" cy="217.2" r="1.6"/>
<circle cx="36.5" cy="219.9" r="1.6"/>
<circle cx="36.5" cy="220.3" r="1.6"/>
<circle cx="14.5" cy="223.4" r="1.6"/>
<circle cx="12.8" cy="222.9" r="1.6"/>
<circle cx="13.1" cy="225.9" r="1.6"/>
<circle cx="12.2" cy="225.4" r="1.6"/>
<circle cx="12.4" cy="227.1" r="1.6"/>
<circle cx="14.7" cy="226.6" r="1.6"/>
<circle cx="11.3" cy="225.4" r="1.6"/>
<circle cx="31.3" cy="234.3" r="1.5"/>
<circle cx="30.8" cy="234.7" r="1.5"/>
<circle cx="28.7" cy="231.7" r="1.5"/>
<circle cx="30.9" cy="234.0" r="1.5"/>
<circle cx="28.5" cy="232.6" r="1.5"/>
<circle cx="31.4" cy="234.1" r="1.5"/>
<circle cx="31.3" cy="232.6" r="1.5"/>
<circle cx="178.0" cy="226.3" r="1.6"/>
<circle cx="179.6" cy="227.9" r="1.6"/>
<circle cx="176.5" cy="228.0" r="1.6"/>
<circle cx="177.6" cy="228.8" r="1.6"/>
<circle cx="177.1" cy="225.8" r="1.6"/>
<circle cx="178.8" cy="228.8" r="1.6"/>
<circle cx="176.1" cy="224.9" r="1.6"/>
<circle cx="177.0" cy="225.8" r="1.8"/>
<circle cx="176.4" cy="225.7" r="1.8"/>
<circle cx="177.8" cy="228.3" r="1.8"/>
<circle cx="177.5" cy="228.7" r="1.8"/>
<circle cx="175.0" cy="225.7" r="1.8"/>
<circle cx="178.3" cy="225.8" r="1.8"/>
<circle cx="174.9" cy="226.0" r="1.8"/>
<circle cx="204.2" cy="225.6" r="1.8"/>
<circle cx="208.4" cy="222.8" r="1.8"/>
<circle cx="205.4" cy="224.1" r="1.8"/>
<circle cx="208.2" cy="222.9" r="1.8"/>
<circle cx="208.3" cy="224.4" r="1.8"/>
<circle cx="207.7" cy="223.9" r="1.8"/>
<circle cx="206.4" cy="223.9" r="1.8"/>
<ellipse cx="222.3" cy="221.4" rx="1.7" ry="1.4"/>
<circle cx="223.1" cy="221.0" r="1.0"/>
<circle cx="257.3" cy="227.7" r="1.8"/>
<circle cx="259.8" cy="225.4" r="1.8"/>
<circle cx="255.8" cy="227.5" r="1.8"/>
<circle cx="256.2" cy="229.5" r="1.8"/>
<circle cx="256.7" cy="227.2" r="1.8"/>
<circle cx="259.2" cy="227.2" r="1.8"/>
<circle cx="258.0" cy="229.6" r="1.8"/>
<circle cx="262.4" cy="223.8" r="1.8"/>
<circle cx="259.8" cy="223.6" r="1.8"/>
<circle cx="261.8" cy="223.3" r="1.8"/>
<circle cx="261.0" cy="225.4" r="1.8"/>
<circle cx="264.2" cy="223.5" r="1.8"/>
<circle cx="260.7" cy="223.7" r="1.8"/>
<circle cx="263.5" cy="222.4" r="1.8"/>
<circle cx="303.9" cy="231.8" r="1.8"/>
<circle cx="302.7" cy="230.1" r="1.8"/>
<circle cx="300.2" cy="232.9" r="1.8"/>
<circle cx="300.6" cy="230.8" r="1.8"/>
<circle cx="303.8" cy="230.3" r="1.8"/>
<circle cx="299.8" cy="229.6" r="1.8"/>
<circle cx="301.2" cy="233.5" r="1.8"/>
<circle cx="311.2" cy="228.2" r="1.8"/>
<circle cx="313.4" cy="225.3" r="1.8"/>
<circle cx="311.0" cy="227.5" r="1.8"/>
<circle cx="312.3" cy="226.2" r="1.8"/>
<circle cx="312.3" cy="227.8" r="1.8"/>
<circle cx="311.3" cy="229.6" r="1.8"/>
<circle cx="313.4" cy="228.0" r="1.8"/>
<ellipse cx="244.0" cy="233.4" rx="1.7" ry="1.4"/>
<circle cx="243.4" cy="233.6" r="1.0"/>
<ellipse cx="256.0" cy="234.6" rx="1.7" ry="1.4"/>
<circle cx="255.2" cy="233.9" r="1.0"/>
<ellipse cx="361.0" cy="194.5" rx="1.4" ry="1.1"/>
<circle cx="361.5" cy="193.7" r="0.8"/>
<circle cx="209.9" cy="224.4" r="2.0"/>
<circle cx="209.3" cy="228.6" r="2.0"/>
<circle cx="209.1" cy="228.5" r="2.0"/>
<circle cx="206.2" cy="228.4" r="2.0"/>
<circle cx="209.6" cy="225.9" r="2.0"/>
<circle cx="209.3" cy="224.4" r="2.0"/>
<circle cx="209.1" cy="227.6" r="2.0"/>
<ellipse cx="228.7" cy="229.0" rx="1.7" ry="1.4"/>
<circle cx="227.7" cy="228.7" r="1.0"/>
<circle cx="243.4" cy="237.4" r="1.6"/>
<circle cx="244.4" cy="237.1" r="1.6"/>
<circle cx="244.0" cy="236.2" r="1.6"/>
<circle cx="244.4" cy="236.3" r="1.6"/>
<circle cx="243.0" cy="235.4" r="1.6"/>
<circle cx="242.1" cy="237.0" r="1.6"/>
<circle cx="244.6" cy="235.7" r="1.6"/>
<circle cx="238.0" cy="243.9" r="1.6"/>
<circle cx="241.2" cy="242.3" r="1.6"/>
<circle cx="241.5" cy="242.4" r="1.6"/>
<circle cx="241.7" cy="242.9" r="1.6"/>
<circle cx="238.2" cy="242.3" r="1.6"/>
<circle cx="239.2" cy="244.7" r="1.6"/>
<circle cx="242.1" cy="244.5" r="1.6"/>
<circle cx="258.1" cy="244.8" r="1.8"/>
<circle cx="257.5" cy="245.3" r="1.8"/>
<circle cx="258.7" cy="248.0" r="1.8"/>
<circle cx="256.6" cy="245.0" r="1.8"/>
<circle cx="259.5" cy="246.1" r="1.8"/>
<circle cx="259.3" cy="247.1" r="1.8"/>
<circle cx="256.4" cy="247.9" r="1.8"/>
<circle cx="247.7" cy="257.3" r="1.8"/>
<circle cx="246.2" cy="260.1" r="1.8"/>
<circle cx="248.1" cy="256.8" r="1.8"/>
<circle cx="249.5" cy="261.2" r="1.8"/>
<circle cx="246.1" cy="260.3" r="1.8"/>
<circle cx="246.6" cy="259.3" r="1.8"/>
<circle cx="249.9" cy="260.7" r="1.8"/>
<circle cx="241.1" cy="242.1" r="1.6"/>
<circle cx="241.6" cy="243.0" r="1.6"/>
<circle cx="243.5" cy="239.7" r="1.6"/>
<circle cx="240.5" cy="241.2" r="1.6"/>
<circle cx="243.4" cy="240.1" r="1.6"/>
<circle cx="243.4" cy="243.7" r="1.6"/>
<circle cx="241.5" cy="242.1" r="1.6"/>
<circle cx="255.3" cy="236.7" r="1.5"/>
<circle cx="255.2" cy="237.0" r="1.5"/>
<circle cx="253.9" cy="236.9" r="1.5"/>
<circle cx="255.0" cy="234.7" r="1.5"/>
<circle cx="254.2" cy="237.4" r="1.5"/>
<circle cx="255.5" cy="236.9" r="1.5"/>
<circle cx="253.5" cy="237.5" r="1.5"/>
<circle cx="301.4" cy="231.5" r="1.5"/>
<circle cx="301.0" cy="232.5" r="1.5"/>
<circle cx="301.8" cy="234.2" r="1.5"/>
<circle cx="302.5" cy="231.0" r="1.5"/>
<circle cx="301.3" cy="234.0" r="1.5"/>
<circle cx="299.9" cy="233.9" r="1.5"/>
<circle cx="301.6" cy="232.0" r="1.5"/>
<circle cx="249.6" cy="258.1" r="1.8"/>
<circle cx="245.4" cy="259.3" r="1.8"/>
<circle cx="247.2" cy="261.6" r="1.8"/>
<circle cx="249.9" cy="260.8" r="1.8"/>
<circle cx="245.6" cy="259.8" r="1.8"/>
<circle cx="248.1" cy="259.1" r="1.8"/>
<circle cx="245.6" cy="259.3" r="1.8"/>
<circle cx="270.9" cy="264.8" r="1.9"/>
<circle cx="272.3" cy="264.4" r="1.9"/>
<circle cx="269.0" cy="260.7" r="1.9"/>
<circle cx="271.1" cy="263.1" r="1.9"/>
<circle cx="270.1" cy="262.5" r="1.9"/>
<circle cx="273.3" cy="261.9" r="1.9"/>
<circle cx="272.9" cy="260.3" r="1.9"/>
<circle cx="270.7" cy="265.9" r="1.6"/>
<circle cx="270.9" cy="265.6" r="1.6"/>
<circle cx="273.2" cy="266.6" r="1.6"/>
<circle cx="272.9" cy="266.2" r="1.6"/>
<circle cx="273.4" cy="265.8" r="1.6"/>
<circle cx="272.5" cy="266.0" r="1.6"/>
<circle cx="273.0" cy="264.0" r="1.6"/>
<circle cx="2.6" cy="226.0" r="1.6"/>
<circle cx="5.5" cy="224.7" r="1.6"/>
<circle cx="4.9" cy="227.0" r="1.6"/>
<circle cx="4.7" cy="228.1" r="1.6"/>
<circle cx="4.5" cy="224.2" r="1.6"/>
<circle cx="4.1" cy="226.8" r="1.6"/>
<circle cx="2.2" cy="224.9" r="1.6"/>
<circle cx="9.6" cy="244.1" r="1.6"/>
<circle cx="6.2" cy="241.0" r="1.6"/>
<circle cx="7.2" cy="241.1" r="1.6"/>
<circle cx="8.0" cy="242.3" r="1.6"/>
<circle cx="7.3" cy="240.7" r="1.6"/>
<circle cx="6.2" cy="240.0" r="1.6"/>
<circle cx="8.8" cy="243.2" r="1.6"/>
<circle cx="2.8" cy="254.5" r="1.6"/>
<circle cx="6.1" cy="256.8" r="1.6"/>
<circle cx="4.3" cy="253.8" r="1.6"/>
<circle cx="5.1" cy="256.1" r="1.6"/>
<circle cx="2.2" cy="252.9" r="1.6"/>
<circle cx="2.1" cy="256.0" r="1.6"/>
<circle cx="4.7" cy="253.4" r="1.6"/>
<circle cx="4.8" cy="271.3" r="1.6"/>
<circle cx="1.1" cy="270.5" r="1.6"/>
<circle cx="2.1" cy="268.9" r="1.6"/>
<circle cx="1.4" cy="271.2" r="1.6"/>
<circle cx="4.5" cy="268.0" r="1.6"/>
<circle cx="2.5" cy="268.5" r="1.6"/>
<circle cx="1.5" cy="271.9" r="1.6"/>
<circle cx="5.6" cy="289.9" r="1.5"/>
<circle cx="5.5" cy="291.0" r="1.5"/>
<circle cx="6.0" cy="289.3" r="1.5"/>
<circle cx="6.2" cy="288.1" r="1.5"/>
<circle cx="5.1" cy="289.4" r="1.5"/>
<circle cx="5.2" cy="289.4" r="1.5"/>
<circle cx="6.3" cy="288.0" r="1.5"/>
<circle cx="7.1" cy="309.0" r="1.5"/>
<circle cx="5.4" cy="308.3" r="1.5"/>
<circle cx="4.7" cy="308.2" r="1.5"/>
<circle cx="7.4" cy="309.7" r="1.5"/>
<circle cx="5.4" cy="308.3" r="1.5"/>
<circle cx="4.5" cy="309.8" r="1.5"/>
<circle cx="4.9" cy="308.2" r="1.5"/>
<circle cx="483.8" cy="42.3" r="1.9"/>
<circle cx="485.1" cy="45.8" r="1.9"/>
<circle cx="483.1" cy="45.0" r="1.9"/>
<circle cx="483.7" cy="44.3" r="1.9"/>
<circle cx="481.6" cy="44.9" r="1.9"/>
<circle cx="484.9" cy="44.7" r="1.9"/>
<circle cx="482.7" cy="41.7" r="1.9"/>
<circle cx="502.3" cy="45.6" r="1.9"/>
<circle cx="500.6" cy="43.3" r="1.9"/>
<circle cx="502.3" cy="43.9" r="1.9"/>
<circle cx="499.5" cy="44.2" r="1.9"/>
<circle cx="502.3" cy="42.9" r="1.9"/>
<circle cx="501.8" cy="45.7" r="1.9"/>
<circle cx="500.6" cy="45.8" r="1.9"/>
<circle cx="526.2" cy="48.8" r="1.9"/>
<circle cx="522.8" cy="48.4" r="1.9"/>
<circle cx="524.5" cy="48.5" r="1.9"/>
<circle cx="526.2" cy="50.8" r="1.9"/>
<circle cx="522.9" cy="48.5" r="1.9"/>
<circle cx="525.3" cy="51.7" r="1.9"/>
<circle cx="525.7" cy="50.7" r="1.9"/>
<circle cx="540.9" cy="45.7" r="1.9"/>
<circle cx="538.7" cy="45.6" r="1.9"/>
<circle cx="537.8" cy="43.1" r="1.9"/>
<circle cx="540.0" cy="42.0" r="1.9"/>
<circle cx="541.5" cy="45.5" r="1.9"/>
<circle cx="540.8" cy="43.4" r="1.9"/>
<circle cx="538.1" cy="42.1" r="1.9"/>
<circle cx="558.4" cy="46.4" r="1.9"/>
<circle cx="557.0" cy="43.5" r="1.9"/>
<circle cx="558.2" cy="44.2" r="1.9"/>
<circle cx="559.6" cy="46.7" r="1.9"/>
<circle cx="556.8" cy="42.9" r="1.9"/>
<circle cx="560.4" cy="45.8" r="1.9"/>
<circle cx="558.1" cy="43.8" r="1.9"/>
<circle cx="547.9" cy="54.7" r="1.8"/>
<circle cx="551.6" cy="52.7" r="1.8"/>
<circle cx="548.8" cy="52.9" r="1.8"/>
<circle cx="550.4" cy="52.8" r="1.8"/>
<circle cx="549.0" cy="53.7" r="1.8"/>
<circle cx="552.0" cy="56.8" r="1.8"/>
<circle cx="549.3" cy="55.0" r="1.8"/>
<circle cx="543.4" cy="69.3" r="1.9"/>
<circle cx="546.2" cy="69.3" r="1.9"/>
<circle cx="543.3" cy="70.8" r="1.9"/>
<circle cx="546.9" cy="72.1" r="1.9"/>
<circle cx="543.3" cy="71.3" r="1.9"/>
<circle cx="547.2" cy="67.6" r="1.9"/>
<circle cx="545.7" cy="71.9" r="1.9"/>
<circle cx="562.8" cy="67.7" r="1.8"/>
<circle cx="560.4" cy="67.8" r="1.8"/>
<circle cx="560.5" cy="63.7" r="1.8"/>
<circle cx="559.7" cy="65.4" r="1.8"/>
<circle cx="561.0" cy="65.0" r="1.8"/>
<circle cx="561.5" cy="65.9" r="1.8"/>
<circle cx="559.8" cy="66.3" r="1.8"/>
<circle cx="522.0" cy="83.5" r="1.9"/>
<circle cx="521.9" cy="86.1" r="1.9"/>
<circle cx="524.1" cy="83.6" r="1.9"/>
<circle cx="519.8" cy="82.4" r="1.9"/>
<circle cx="520.8" cy="83.7" r="1.9"/>
<circle cx="520.7" cy="83.2" r="1.9"/>
<circle cx="519.8" cy="84.0" r="1.9"/>
<ellipse cx="514.0" cy="70.0" rx="1.7" ry="1.4"/>
<circle cx="514.0" cy="69.4" r="1.0"/>
<ellipse cx="525.0" cy="66.0" rx="1.7" ry="1.4"/>
<circle cx="525.2" cy="67.0" r="1.0"/>
<circle cx="582.2" cy="94.4" r="1.9"/>
<circle cx="577.8" cy="94.7" r="1.9"/>
<circle cx="577.8" cy="95.1" r="1.9"/>
<circle cx="580.1" cy="94.1" r="1.9"/>
<circle cx="578.0" cy="94.9" r="1.9"/>
<circle cx="579.8" cy="97.2" r="1.9"/>
<circle cx="581.4" cy="93.1" r="1.9"/>
<ellipse cx="627.0" cy="35.0" rx="1.5" ry="1.3"/>
<circle cx="627.6" cy="35.3" r="0.9"/>
<circle cx="456.0" cy="66.3" r="1.9"/>
<circle cx="459.5" cy="65.2" r="1.9"/>
<circle cx="459.0" cy="67.3" r="1.9"/>
<circle cx="456.8" cy="67.4" r="1.9"/>
<circle cx="458.6" cy="69.0" r="1.9"/>
<circle cx="460.0" cy="68.1" r="1.9"/>
<circle cx="458.9" cy="65.0" r="1.9"/>
<circle cx="468.7" cy="66.0" r="1.9"/>
<circle cx="468.8" cy="62.8" r="1.9"/>
<circle cx="467.3" cy="64.0" r="1.9"/>
<circle cx="470.0" cy="63.7" r="1.9"/>
<circle cx="465.7" cy="66.4" r="1.9"/>
<circle cx="468.8" cy="65.4" r="1.9"/>
<circle cx="469.0" cy="62.2" r="1.9"/>
<circle cx="440.8" cy="92.1" r="1.9"/>
<circle cx="440.7" cy="92.8" r="1.9"/>
<circle cx="439.9" cy="93.4" r="1.9"/>
<circle cx="442.7" cy="90.0" r="1.9"/>
<circle cx="440.1" cy="89.5" r="1.9"/>
<circle cx="438.8" cy="88.6" r="1.9"/>
<circle cx="439.3" cy="90.3" r="1.9"/>
<ellipse cx="440.0" cy="50.6" rx="1.7" ry="1.4"/>
<circle cx="440.0" cy="49.7" r="1.0"/>
<ellipse cx="435.6" cy="69.0" rx="1.7" ry="1.4"/>
<circle cx="435.3" cy="69.7" r="1.0"/>
<circle cx="471.6" cy="80.7" r="1.5"/>
<circle cx="469.5" cy="81.6" r="1.5"/>
<circle cx="469.4" cy="79.9" r="1.5"/>
<circle cx="469.8" cy="81.1" r="1.5"/>
<circle cx="469.7" cy="81.9" r="1.5"/>
<circle cx="471.6" cy="78.1" r="1.5"/>
<circle cx="469.3" cy="79.7" r="1.5"/>
<ellipse cx="462.0" cy="83.4" rx="1.7" ry="1.4"/>
<circle cx="462.4" cy="83.5" r="1.0"/>
<circle cx="529.1" cy="57.0" r="1.5"/>
<circle cx="529.3" cy="56.6" r="1.5"/>
<circle cx="529.2" cy="58.4" r="1.5"/>
<circle cx="527.9" cy="58.2" r="1.5"/>
<circle cx="527.6" cy="57.1" r="1.5"/>
<circle cx="528.2" cy="57.1" r="1.5"/>
<circle cx="527.7" cy="59.6" r="1.5"/>
<ellipse cx="555.0" cy="60.0" rx="1.7" ry="1.4"/>
<circle cx="556.0" cy="59.3" r="1.0"/>
<ellipse cx="455.0" cy="96.0" rx="1.5" ry="1.3"/>
<circle cx="454.6" cy="96.5" r="0.9"/>
<circle cx="468.7" cy="97.7" r="1.5"/>
<circle cx="468.3" cy="99.3" r="1.5"/>
<circle cx="471.1" cy="97.0" r="1.5"/>
<circle cx="470.3" cy="96.9" r="1.5"/>
<circle cx="468.6" cy="99.0" r="1.5"/>
<circle cx="471.9" cy="98.8" r="1.5"/>
<circle cx="468.4" cy="97.7" r="1.5"/>
<ellipse cx="510.0" cy="100.0" rx="1.7" ry="1.4"/>
<circle cx="510.6" cy="100.9" r="1.0"/>
<circle cx="658.0" cy="23.5" r="1.9"/>
<circle cx="657.3" cy="24.1" r="1.9"/>
<circle cx="654.2" cy="23.5" r="1.9"/>
<circle cx="655.4" cy="24.7" r="1.9"/>
<circle cx="656.8" cy="26.7" r="1.9"/>
<circle cx="656.4" cy="25.4" r="1.9"/>
<circle cx="656.0" cy="25.9" r="1.9"/>
<circle cx="662.3" cy="36.3" r="1.9"/>
<circle cx="661.5" cy="37.3" r="1.9"/>
<circle cx="661.1" cy="37.5" r="1.9"/>
<circle cx="660.2" cy="36.4" r="1.9"/>
<circle cx="663.2" cy="39.3" r="1.9"/>
<circle cx="662.1" cy="36.6" r="1.9"/>
<circle cx="663.7" cy="35.8" r="1.9"/>
<circle cx="666.6" cy="56.0" r="1.9"/>
<circle cx="662.8" cy="55.9" r="1.9"/>
<circle cx="663.6" cy="54.1" r="1.9"/>
<circle cx="667.1" cy="54.7" r="1.9"/>
<circle cx="664.2" cy="56.3" r="1.9"/>
<circle cx="667.3" cy="57.0" r="1.9"/>
<circle cx="664.8" cy="54.1" r="1.9"/>
<circle cx="662.0" cy="79.7" r="1.9"/>
<circle cx="657.5" cy="79.7" r="1.9"/>
<circle cx="659.8" cy="76.8" r="1.9"/>
<circle cx="657.8" cy="78.5" r="1.9"/>
<circle cx="658.9" cy="78.3" r="1.9"/>
<circle cx="659.0" cy="77.3" r="1.9"/>
<circle cx="658.9" cy="79.8" r="1.9"/>
<circle cx="657.7" cy="88.8" r="1.8"/>
<circle cx="655.2" cy="87.0" r="1.8"/>
<circle cx="658.8" cy="87.5" r="1.8"/>
<circle cx="657.7" cy="86.9" r="1.8"/>
<circle cx="656.8" cy="86.2" r="1.8"/>
<circle cx="657.2" cy="86.3" r="1.8"/>
<circle cx="658.2" cy="86.1" r="1.8"/>
<circle cx="647.7" cy="90.6" r="1.8"/>
<circle cx="647.0" cy="91.0" r="1.8"/>
<circle cx="645.7" cy="87.9" r="1.8"/>
<circle cx="646.8" cy="88.7" r="1.8"/>
<circle cx="646.4" cy="88.3" r="1.8"/>
<circle cx="645.0" cy="90.1" r="1.8"/>
<circle cx="647.5" cy="89.1" r="1.8"/>
<circle cx="647.8" cy="96.7" r="1.8"/>
<circle cx="644.6" cy="94.0" r="1.8"/>
<circle cx="646.0" cy="96.8" r="1.8"/>
<circle cx="647.4" cy="93.9" r="1.8"/>
<circle cx="648.1" cy="96.4" r="1.8"/>
<circle cx="645.8" cy="96.3" r="1.8"/>
<circle cx="644.0" cy="97.4" r="1.8"/>
<circle cx="653.2" cy="98.5" r="1.8"/>
<circle cx="650.4" cy="98.9" r="1.8"/>
<circle cx="650.1" cy="102.3" r="1.8"/>
<circle cx="652.9" cy="99.2" r="1.8"/>
<circle cx="649.4" cy="98.4" r="1.8"/>
<circle cx="649.7" cy="99.0" r="1.8"/>
<circle cx="651.5" cy="98.4" r="1.8"/>
<circle cx="665.1" cy="94.0" r="1.8"/>
<circle cx="667.0" cy="96.8" r="1.8"/>
<circle cx="665.0" cy="97.0" r="1.8"/>
<circle cx="664.7" cy="93.9" r="1.8"/>
<circle cx="663.8" cy="92.9" r="1.8"/>
<circle cx="668.0" cy="93.3" r="1.8"/>
<circle cx="667.5" cy="94.2" r="1.8"/>
<circle cx="677.4" cy="96.9" r="1.8"/>
<circle cx="677.9" cy="100.9" r="1.8"/>
<circle cx="678.8" cy="99.8" r="1.8"/>
<circle cx="679.0" cy="98.2" r="1.8"/>
<circle cx="676.4" cy="96.3" r="1.8"/>
<circle cx="676.5" cy="96.6" r="1.8"/>
<circle cx="677.3" cy="96.6" r="1.8"/>
<circle cx="683.1" cy="110.5" r="1.5"/>
<circle cx="684.3" cy="109.2" r="1.5"/>
<circle cx="685.7" cy="109.8" r="1.5"/>
<circle cx="685.8" cy="109.2" r="1.5"/>
<circle cx="684.2" cy="107.4" r="1.5"/>
<circle cx="686.2" cy="108.2" r="1.5"/>
<circle cx="685.8" cy="109.1" r="1.5"/>
<circle cx="662.6" cy="111.0" r="1.8"/>
<circle cx="661.5" cy="110.2" r="1.8"/>
<circle cx="659.3" cy="109.7" r="1.8"/>
<circle cx="659.2" cy="111.1" r="1.8"/>
<circle cx="660.0" cy="112.0" r="1.8"/>
<circle cx="661.2" cy="109.6" r="1.8"/>
<circle cx="659.9" cy="113.3" r="1.8"/>
<circle cx="654.5" cy="115.4" r="1.5"/>
<circle cx="651.0" cy="112.1" r="1.5"/>
<circle cx="652.4" cy="113.2" r="1.5"/>
<circle cx="653.3" cy="114.5" r="1.5"/>
<circle cx="653.3" cy="115.0" r="1.5"/>
<circle cx="652.1" cy="113.9" r="1.5"/>
<circle cx="651.7" cy="114.9" r="1.5"/>
<circle cx="644.8" cy="91.9" r="1.6"/>
<circle cx="644.8" cy="91.7" r="1.6"/>
<circle cx="644.2" cy="93.4" r="1.6"/>
<circle cx="644.5" cy="90.8" r="1.6"/>
<circle cx="644.8" cy="94.0" r="1.6"/>
<circle cx="646.5" cy="94.4" r="1.6"/>
<circle cx="646.4" cy="92.7" r="1.6"/>
<circle cx="656.2" cy="95.2" r="1.6"/>
<circle cx="657.7" cy="97.5" r="1.6"/>
<circle cx="656.7" cy="95.1" r="1.6"/>
<circle cx="658.3" cy="97.1" r="1.6"/>
<circle cx="656.8" cy="98.5" r="1.6"/>
<circle cx="658.9" cy="96.6" r="1.6"/>
<circle cx="657.9" cy="97.2" r="1.6"/>
<circle cx="678.2" cy="99.5" r="1.6"/>
<circle cx="676.2" cy="96.6" r="1.6"/>
<circle cx="678.2" cy="96.7" r="1.6"/>
<circle cx="678.8" cy="96.9" r="1.6"/>
<circle cx="678.5" cy="100.4" r="1.6"/>
<circle cx="677.2" cy="96.6" r="1.6"/>
<circle cx="677.8" cy="96.5" r="1.6"/>
<circle cx="680.4" cy="102.8" r="1.5"/>
<circle cx="680.4" cy="100.8" r="1.5"/>
<circle cx="679.9" cy="100.0" r="1.5"/>
<circle cx="680.6" cy="102.3" r="1.5"/>
<circle cx="680.7" cy="99.5" r="1.5"/>
<circle cx="681.4" cy="102.1" r="1.5"/>
<circle cx="679.9" cy="102.2" r="1.5"/>
<circle cx="661.9" cy="114.2" r="1.6"/>
<circle cx="663.1" cy="112.4" r="1.6"/>
<circle cx="661.6" cy="112.3" r="1.6"/>
<circle cx="664.0" cy="113.7" r="1.6"/>
<circle cx="662.1" cy="114.5" r="1.6"/>
<circle cx="662.5" cy="113.0" r="1.6"/>
<circle cx="660.9" cy="114.7" r="1.6"/>
<ellipse cx="651.3" cy="115.6" rx="1.7" ry="1.4"/>
<circle cx="652.2" cy="116.0" r="1.0"/>
<circle cx="632.3" cy="115.8" r="1.6"/>
<circle cx="631.4" cy="118.3" r="1.6"/>
<circle cx="633.9" cy="116.5" r="1.6"/>
<circle cx="631.5" cy="118.2" r="1.6"/>
<circle cx="633.9" cy="118.8" r="1.6"/>
<circle cx="632.8" cy="118.6" r="1.6"/>
<circle cx="632.9" cy="118.3" r="1.6"/>
<ellipse cx="634.0" cy="132.7" rx="1.7" ry="1.4"/>
<circle cx="633.1" cy="132.7" r="1.0"/>
<ellipse cx="671.0" cy="120.0" rx="1.7" ry="1.4"/>
<circle cx="671.6" cy="120.4" r="1.0"/>
<ellipse cx="685.5" cy="110.0" rx="1.7" ry="1.4"/>
<circle cx="686.5" cy="110.2" r="1.0"/>
<ellipse cx="611.4" cy="97.0" rx="1.5" ry="1.3"/>
<circle cx="611.0" cy="97.5" r="0.9"/>
<circle cx="634.3" cy="115.8" r="1.6"/>
<circle cx="633.5" cy="113.1" r="1.6"/>
<circle cx="630.6" cy="113.8" r="1.6"/>
<circle cx="632.1" cy="116.2" r="1.6"/>
<circle cx="631.7" cy="113.0" r="1.6"/>
<circle cx="630.8" cy="117.1" r="1.6"/>
<circle cx="631.6" cy="114.2" r="1.6"/>
<ellipse cx="631.8" cy="125.0" rx="1.5" ry="1.3"/>
<circle cx="632.6" cy="125.9" r="0.9"/>
<ellipse cx="634.4" cy="132.0" rx="1.5" ry="1.3"/>
<circle cx="634.0" cy="132.2" r="0.9"/>
<ellipse cx="966.0" cy="92.7" rx="1.7" ry="1.4"/>
<circle cx="965.8" cy="92.3" r="1.0"/>
<ellipse cx="953.0" cy="99.0" rx="1.6" ry="1.3"/>
<circle cx="953.9" cy="98.0" r="1.0"/>
<ellipse cx="940.0" cy="110.0" rx="1.7" ry="1.4"/>
<circle cx="940.4" cy="110.5" r="1.0"/>
<ellipse cx="944.0" cy="108.0" rx="1.7" ry="1.4"/>
<circle cx="944.5" cy="108.1" r="1.0"/>
<ellipse cx="918.0" cy="142.0" rx="1.7" ry="1.4"/>
<circle cx="918.8" cy="142.6" r="1.0"/>
<ellipse cx="914.0" cy="140.0" rx="1.7" ry="1.4"/>
<circle cx="914.3" cy="139.1" r="1.0"/>
<ellipse cx="901.0" cy="155.0" rx="1.7" ry="1.4"/>
<circle cx="901.8" cy="154.3" r="1.0"/>
<ellipse cx="896.7" cy="166.0" rx="1.7" ry="1.4"/>
<circle cx="896.0" cy="165.6" r="1.0"/>
<ellipse cx="879.0" cy="177.0" rx="1.7" ry="1.4"/>
<circle cx="879.0" cy="176.7" r="1.0"/>
<ellipse cx="875.0" cy="179.0" rx="1.6" ry="1.3"/>
<circle cx="874.9" cy="178.6" r="1.0"/>
<ellipse cx="858.0" cy="200.7" rx="1.7" ry="1.4"/>
<circle cx="857.5" cy="201.1" r="1.0"/>
<ellipse cx="842.6" cy="216.0" rx="1.7" ry="1.4"/>
<circle cx="842.9" cy="215.1" r="1.0"/>
<ellipse cx="827.5" cy="229.0" rx="1.6" ry="1.3"/>
<circle cx="828.3" cy="228.3" r="1.0"/>
<ellipse cx="888.0" cy="235.0" rx="1.7" ry="1.4"/>
<circle cx="887.6" cy="235.5" r="1.0"/>
<ellipse cx="896.7" cy="231.0" rx="1.7" ry="1.4"/>
<circle cx="897.4" cy="231.9" r="1.0"/>
<ellipse cx="888.0" cy="242.0" rx="1.7" ry="1.4"/>
<circle cx="888.7" cy="242.1" r="1.0"/>
<ellipse cx="985.0" cy="142.0" rx="1.7" ry="1.4"/>
<circle cx="985.8" cy="142.6" r="1.0"/>
<ellipse cx="950.7" cy="179.0" rx="1.6" ry="1.3"/>
<circle cx="951.4" cy="180.0" r="1.0"/>
<ellipse cx="918.0" cy="211.6" rx="1.7" ry="1.4"/>
<circle cx="918.9" cy="211.5" r="1.0"/>
<ellipse cx="905.0" cy="216.0" rx="1.6" ry="1.3"/>
<circle cx="904.9" cy="216.5" r="1.0"/>
<ellipse cx="870.8" cy="190.0" rx="1.6" ry="1.3"/>
<circle cx="871.5" cy="190.5" r="1.0"/>
<ellipse cx="868.6" cy="183.5" rx="1.6" ry="1.3"/>
<circle cx="868.3" cy="182.6" r="1.0"/>
<circle cx="973.9" cy="449.1" r="2.0"/>
<circle cx="978.2" cy="444.4" r="2.0"/>
<circle cx="975.3" cy="447.6" r="2.0"/>
<circle cx="976.0" cy="444.6" r="2.0"/>
<circle cx="977.9" cy="447.8" r="2.0"/>
<circle cx="975.0" cy="446.9" r="2.0"/>
<circle cx="975.3" cy="447.7" r="2.0"/>
<circle cx="987.1" cy="467.4" r="2.0"/>
<circle cx="984.0" cy="466.2" r="2.0"/>
<circle cx="986.8" cy="468.3" r="2.0"/>
<circle cx="984.2" cy="469.2" r="2.0"/>
<circle cx="985.5" cy="469.7" r="2.0"/>
<circle cx="987.1" cy="464.7" r="2.0"/>
<circle cx="984.7" cy="464.4" r="2.0"/>
<ellipse cx="952.0" cy="538.0" rx="1.5" ry="1.3"/>
<circle cx="952.9" cy="537.5" r="0.9"/>
<ellipse cx="969.0" cy="519.0" rx="1.2" ry="1.0"/>
<ellipse cx="940.0" cy="550.0" rx="1.4" ry="1.1"/>
<circle cx="939.4" cy="550.1" r="0.8"/>
<ellipse cx="936.0" cy="554.0" rx="1.1" ry="0.9"/>
<ellipse cx="965.0" cy="350.0" rx="1.4" ry="1.1"/>
<circle cx="965.9" cy="350.3" r="0.8"/>
<ellipse cx="990.0" cy="420.0" rx="1.2" ry="1.0"/>
<ellipse cx="409.0" cy="91.1" rx="1.3" ry="1.0"/>
<ellipse cx="402.0" cy="92.3" rx="1.3" ry="1.1"/>
<circle cx="402.8" cy="92.6" r="0.8"/>
<ellipse cx="408.6" cy="66.8" rx="1.3" ry="1.0"/>
<ellipse cx="398.3" cy="76.1" rx="0.9" ry="0.7"/>
<ellipse cx="421.3" cy="70.0" rx="0.9" ry="0.8"/>
<ellipse cx="406.0" cy="91.8" rx="0.9" ry="0.8"/>
<ellipse cx="409.6" cy="78.8" rx="1.0" ry="0.8"/>
<ellipse cx="412.5" cy="61.5" rx="1.1" ry="0.9"/>
<ellipse cx="423.5" cy="76.0" rx="1.3" ry="1.1"/>
<circle cx="423.6" cy="75.9" r="0.8"/>
<ellipse cx="406.6" cy="84.4" rx="1.0" ry="0.8"/>
<ellipse cx="414.8" cy="91.6" rx="1.1" ry="0.9"/>
<ellipse cx="418.4" cy="70.6" rx="1.1" ry="0.9"/>
<ellipse cx="400.4" cy="69.4" rx="1.2" ry="1.0"/>
<ellipse cx="417.0" cy="83.1" rx="1.2" ry="1.0"/>
<ellipse cx="400.0" cy="84.7" rx="0.9" ry="0.7"/>
<ellipse cx="408.3" cy="64.8" rx="1.1" ry="0.9"/>
<ellipse cx="423.0" cy="77.3" rx="1.4" ry="1.1"/>
<circle cx="423.2" cy="76.4" r="0.8"/>
<ellipse cx="415.7" cy="63.4" rx="1.3" ry="1.1"/>
<circle cx="415.0" cy="64.4" r="0.8"/>
<ellipse cx="406.1" cy="80.4" rx="1.1" ry="0.9"/>
<ellipse cx="414.8" cy="71.8" rx="1.0" ry="0.8"/>
<ellipse cx="401.5" cy="90.4" rx="1.3" ry="1.1"/>
<circle cx="400.9" cy="89.9" r="0.8"/>
<ellipse cx="404.6" cy="61.9" rx="0.9" ry="0.8"/>
<ellipse cx="418.9" cy="90.4" rx="1.4" ry="1.2"/>
<circle cx="418.9" cy="90.9" r="0.8"/>
<ellipse cx="408.5" cy="61.7" rx="1.0" ry="0.8"/>
<ellipse cx="409.0" cy="84.1" rx="1.4" ry="1.2"/>
<circle cx="408.2" cy="84.7" r="0.8"/>
<ellipse cx="413.7" cy="80.7" rx="0.9" ry="0.8"/>
<ellipse cx="403.9" cy="64.6" rx="1.2" ry="1.0"/>
<ellipse cx="408.4" cy="92.3" rx="1.4" ry="1.1"/>
<circle cx="408.6" cy="91.4" r="0.8"/>
<ellipse cx="410.5" cy="67.2" rx="1.1" ry="0.9"/>
<ellipse cx="398.8" cy="80.2" rx="1.3" ry="1.1"/>
<circle cx="398.6" cy="81.0" r="0.8"/>
<ellipse cx="411.3" cy="64.7" rx="0.9" ry="0.7"/>
<ellipse cx="399.4" cy="83.5" rx="1.4" ry="1.1"/>
<circle cx="399.9" cy="82.8" r="0.8"/>
<ellipse cx="399.6" cy="60.3" rx="1.4" ry="1.2"/>
<circle cx="399.9" cy="59.4" r="0.8"/>
<ellipse cx="402.6" cy="83.9" rx="1.1" ry="0.9"/>
<ellipse cx="398.1" cy="86.5" rx="1.3" ry="1.0"/>
<ellipse cx="412.8" cy="75.5" rx="1.2" ry="1.0"/>
<ellipse cx="411.4" cy="74.1" rx="1.2" ry="1.0"/>
<ellipse cx="414.3" cy="65.1" rx="1.1" ry="0.9"/>
<ellipse cx="413.8" cy="62.7" rx="1.3" ry="1.1"/>
<circle cx="413.7" cy="62.3" r="0.8"/>
<ellipse cx="416.8" cy="70.9" rx="1.2" ry="1.0"/>
<ellipse cx="412.7" cy="73.9" rx="1.1" ry="0.9"/>
<ellipse cx="415.1" cy="64.5" rx="1.4" ry="1.1"/>
<circle cx="416.1" cy="64.5" r="0.8"/>
<ellipse cx="411.8" cy="80.9" rx="1.4" ry="1.1"/>
<circle cx="412.7" cy="80.9" r="0.8"/>
<ellipse cx="403.8" cy="84.4" rx="1.3" ry="1.0"/>
<ellipse cx="401.8" cy="79.1" rx="1.2" ry="1.0"/>
<ellipse cx="857.1" cy="445.6" rx="1.4" ry="1.1"/>
<circle cx="857.6" cy="444.6" r="0.8"/>
<ellipse cx="913.8" cy="394.0" rx="1.2" ry="1.0"/>
<ellipse cx="874.5" cy="432.6" rx="1.5" ry="1.2"/>
<circle cx="875.2" cy="432.8" r="0.9"/>
<ellipse cx="917.3" cy="379.2" rx="1.2" ry="1.0"/>
<ellipse cx="893.9" cy="403.6" rx="1.6" ry="1.3"/>
<circle cx="893.6" cy="404.3" r="0.9"/>
<ellipse cx="857.0" cy="439.8" rx="1.5" ry="1.3"/>
<circle cx="857.8" cy="439.1" r="0.9"/>
<ellipse cx="871.4" cy="434.5" rx="1.4" ry="1.2"/>
<circle cx="870.4" cy="434.8" r="0.8"/>
<circle cx="870.9" cy="433.3" r="1.4"/>
<circle cx="869.8" cy="433.1" r="1.4"/>
<circle cx="867.9" cy="434.8" r="1.4"/>
<circle cx="871.0" cy="436.0" r="1.4"/>
<circle cx="870.3" cy="435.5" r="1.4"/>
<circle cx="868.4" cy="434.6" r="1.4"/>
<circle cx="868.2" cy="433.7" r="1.4"/>
<ellipse cx="889.3" cy="410.0" rx="1.4" ry="1.2"/>
<circle cx="888.6" cy="409.9" r="0.8"/>
<ellipse cx="857.1" cy="448.7" rx="1.1" ry="0.9"/>
<ellipse cx="902.3" cy="396.0" rx="1.1" ry="0.9"/>
<ellipse cx="929.0" cy="365.0" rx="1.4" ry="1.1"/>
<circle cx="928.1" cy="364.3" r="0.8"/>
<ellipse cx="927.5" cy="380.3" rx="1.1" ry="0.9"/>
<ellipse cx="854.8" cy="449.1" rx="1.6" ry="1.3"/>
<circle cx="855.2" cy="449.3" r="0.9"/>
<ellipse cx="902.7" cy="399.1" rx="1.6" ry="1.3"/>
<circle cx="902.1" cy="398.5" r="1.0"/>
<ellipse cx="876.5" cy="427.4" rx="1.2" ry="1.0"/>
<ellipse cx="890.7" cy="408.7" rx="1.4" ry="1.1"/>
<circle cx="891.0" cy="407.8" r="0.8"/>
<ellipse cx="867.1" cy="435.6" rx="1.3" ry="1.0"/>
<ellipse cx="890.2" cy="417.4" rx="1.2" ry="1.0"/>
<circle cx="906.4" cy="396.6" r="1.4"/>
<circle cx="906.9" cy="394.2" r="1.4"/>
<circle cx="906.4" cy="395.6" r="1.4"/>
<circle cx="904.3" cy="396.7" r="1.4"/>
<circle cx="904.3" cy="394.3" r="1.4"/>
<circle cx="906.8" cy="397.3" r="1.4"/>
<circle cx="906.2" cy="394.0" r="1.4"/>
<ellipse cx="899.3" cy="400.5" rx="1.1" ry="0.9"/>
<ellipse cx="916.2" cy="392.2" rx="1.7" ry="1.4"/>
<circle cx="916.1" cy="392.4" r="1.0"/>
<ellipse cx="881.7" cy="419.3" rx="1.2" ry="1.0"/>
<ellipse cx="853.9" cy="447.0" rx="1.4" ry="1.1"/>
<circle cx="853.4" cy="447.7" r="0.8"/>
<ellipse cx="934.6" cy="368.7" rx="1.4" ry="1.1"/>
<circle cx="934.4" cy="368.8" r="0.8"/>
<ellipse cx="931.9" cy="368.7" rx="1.5" ry="1.2"/>
<circle cx="931.9" cy="367.7" r="0.9"/>
<circle cx="880.1" cy="418.7" r="1.4"/>
<circle cx="880.2" cy="417.5" r="1.4"/>
<circle cx="878.4" cy="416.6" r="1.4"/>
<circle cx="877.5" cy="416.2" r="1.4"/>
<circle cx="878.9" cy="417.0" r="1.4"/>
<circle cx="879.6" cy="419.2" r="1.4"/>
<circle cx="877.7" cy="418.7" r="1.4"/>
<circle cx="876.3" cy="424.0" r="1.4"/>
<circle cx="876.1" cy="424.8" r="1.4"/>
<circle cx="876.6" cy="422.9" r="1.4"/>
<circle cx="877.1" cy="422.9" r="1.4"/>
<circle cx="876.0" cy="424.0" r="1.4"/>
<circle cx="878.0" cy="425.3" r="1.4"/>
<circle cx="877.1" cy="424.2" r="1.4"/>
<ellipse cx="890.7" cy="411.4" rx="1.3" ry="1.0"/>
<ellipse cx="922.4" cy="376.5" rx="1.6" ry="1.4"/>
<circle cx="922.0" cy="376.5" r="1.0"/>
<circle cx="874.2" cy="428.8" r="1.4"/>
<circle cx="874.3" cy="427.8" r="1.4"/>
<circle cx="873.8" cy="428.3" r="1.4"/>
<circle cx="872.7" cy="427.3" r="1.4"/>
<circle cx="875.2" cy="428.1" r="1.4"/>
<circle cx="875.1" cy="430.0" r="1.4"/>
<circle cx="874.9" cy="428.6" r="1.4"/>
<ellipse cx="907.4" cy="394.8" rx="1.2" ry="1.0"/>
<ellipse cx="916.1" cy="385.1" rx="1.5" ry="1.2"/>
<circle cx="916.8" cy="385.2" r="0.9"/>
<ellipse cx="876.9" cy="428.3" rx="1.1" ry="0.9"/>
<ellipse cx="852.5" cy="450.5" rx="1.5" ry="1.2"/>
<circle cx="851.6" cy="451.1" r="0.9"/>
<circle cx="921.2" cy="373.6" r="1.4"/>
<circle cx="922.0" cy="374.2" r="1.4"/>
<circle cx="922.9" cy="374.0" r="1.4"/>
<circle cx="920.0" cy="374.2" r="1.4"/>
<circle cx="922.2" cy="371.8" r="1.4"/>
<circle cx="921.9" cy="374.1" r="1.4"/>
<circle cx="921.9" cy="373.2" r="1.4"/>
<ellipse cx="927.1" cy="376.8" rx="1.5" ry="1.2"/>
<circle cx="926.7" cy="377.0" r="0.9"/>
<ellipse cx="927.1" cy="371.2" rx="1.2" ry="1.0"/>
<circle cx="869.4" cy="434.1" r="1.4"/>
<circle cx="869.2" cy="433.1" r="1.4"/>
<circle cx="871.0" cy="432.2" r="1.4"/>
<circle cx="869.1" cy="434.5" r="1.4"/>
<circle cx="872.3" cy="433.4" r="1.4"/>
<circle cx="871.6" cy="432.7" r="1.4"/>
<circle cx="869.6" cy="433.0" r="1.4"/>
<ellipse cx="903.7" cy="398.1" rx="1.2" ry="1.0"/>
<ellipse cx="813.9" cy="534.0" rx="1.6" ry="1.3"/>
<circle cx="813.0" cy="534.1" r="0.9"/>
<ellipse cx="838.3" cy="514.2" rx="1.4" ry="1.2"/>
<circle cx="838.9" cy="513.8" r="0.8"/>
<ellipse cx="814.8" cy="531.0" rx="1.1" ry="0.9"/>
<ellipse cx="886.9" cy="470.2" rx="1.3" ry="1.1"/>
<circle cx="887.8" cy="469.5" r="0.8"/>
<ellipse cx="865.1" cy="485.5" rx="1.5" ry="1.2"/>
<circle cx="864.6" cy="485.7" r="0.9"/>
<ellipse cx="890.6" cy="464.8" rx="1.5" ry="1.2"/>
<circle cx="890.7" cy="465.6" r="0.9"/>
<ellipse cx="837.7" cy="515.3" rx="1.2" ry="1.0"/>
<ellipse cx="807.3" cy="539.9" rx="1.3" ry="1.1"/>
<circle cx="806.3" cy="540.5" r="0.8"/>
<ellipse cx="860.2" cy="496.7" rx="1.6" ry="1.3"/>
<circle cx="859.3" cy="497.3" r="0.9"/>
<ellipse cx="810.2" cy="538.9" rx="1.2" ry="1.0"/>
<ellipse cx="808.2" cy="537.2" rx="1.5" ry="1.2"/>
<circle cx="808.4" cy="536.2" r="0.9"/>
<ellipse cx="881.8" cy="475.4" rx="1.4" ry="1.1"/>
<circle cx="882.6" cy="475.0" r="0.8"/>
<ellipse cx="811.7" cy="540.3" rx="1.1" ry="0.9"/>
<ellipse cx="881.7" cy="476.2" rx="1.1" ry="0.9"/>
<ellipse cx="899.5" cy="457.2" rx="1.6" ry="1.3"/>
<circle cx="899.4" cy="458.0" r="0.9"/>
<ellipse cx="905.1" cy="456.4" rx="1.0" ry="0.8"/>
<ellipse cx="874.0" cy="483.9" rx="1.7" ry="1.4"/>
<circle cx="873.8" cy="483.0" r="1.0"/>
<ellipse cx="900.1" cy="455.6" rx="1.6" ry="1.3"/>
<circle cx="899.6" cy="456.1" r="1.0"/>
<ellipse cx="890.2" cy="466.4" rx="1.1" ry="0.9"/>
<ellipse cx="842.7" cy="504.7" rx="1.3" ry="1.1"/>
<circle cx="842.0" cy="504.3" r="0.8"/>
<ellipse cx="807.6" cy="542.0" rx="1.3" ry="1.0"/>
<ellipse cx="836.4" cy="517.2" rx="1.6" ry="1.3"/>
<circle cx="835.9" cy="517.0" r="0.9"/>
<ellipse cx="818.6" cy="532.6" rx="1.2" ry="1.0"/>
<ellipse cx="851.5" cy="501.5" rx="1.3" ry="1.1"/>
<circle cx="850.8" cy="502.4" r="0.8"/>
<ellipse cx="868.0" cy="481.6" rx="1.1" ry="0.9"/>
<ellipse cx="801.5" cy="545.5" rx="1.5" ry="1.2"/>
<circle cx="802.4" cy="544.7" r="0.9"/>
<ellipse cx="820.0" cy="530.3" rx="1.5" ry="1.2"/>
<circle cx="819.3" cy="530.4" r="0.9"/>
<ellipse cx="834.3" cy="513.8" rx="1.4" ry="1.2"/>
<circle cx="835.2" cy="514.3" r="0.9"/>
<ellipse cx="866.3" cy="486.9" rx="1.2" ry="1.0"/>
<circle cx="849.3" cy="509.5" r="1.4"/>
<circle cx="848.9" cy="508.3" r="1.4"/>
<circle cx="851.5" cy="508.0" r="1.4"/>
<circle cx="851.1" cy="509.1" r="1.4"/>
<circle cx="849.4" cy="506.9" r="1.4"/>
<circle cx="849.9" cy="506.7" r="1.4"/>
<circle cx="849.4" cy="506.6" r="1.4"/>
<circle cx="888.0" cy="466.3" r="1.4"/>
<circle cx="887.4" cy="465.4" r="1.4"/>
<circle cx="887.2" cy="464.4" r="1.4"/>
<circle cx="888.1" cy="467.2" r="1.4"/>
<circle cx="887.5" cy="464.1" r="1.4"/>
<circle cx="890.0" cy="464.9" r="1.4"/>
<circle cx="888.3" cy="465.3" r="1.4"/>
<ellipse cx="806.8" cy="541.2" rx="1.4" ry="1.2"/>
<circle cx="806.8" cy="540.3" r="0.8"/>
<ellipse cx="884.8" cy="470.6" rx="1.5" ry="1.2"/>
<circle cx="885.1" cy="471.4" r="0.9"/>
<ellipse cx="832.2" cy="520.5" rx="1.7" ry="1.4"/>
<circle cx="831.5" cy="521.3" r="1.0"/>
<ellipse cx="822.2" cy="526.6" rx="1.6" ry="1.3"/>
<circle cx="822.8" cy="526.9" r="0.9"/>
<circle cx="861.2" cy="493.5" r="1.4"/>
<circle cx="861.1" cy="495.1" r="1.4"/>
<circle cx="861.6" cy="493.8" r="1.4"/>
<circle cx="862.0" cy="491.9" r="1.4"/>
<circle cx="860.4" cy="491.9" r="1.4"/>
<circle cx="861.1" cy="494.2" r="1.4"/>
<circle cx="860.6" cy="492.4" r="1.4"/>
<ellipse cx="810.2" cy="539.6" rx="1.6" ry="1.3"/>
<circle cx="809.3" cy="540.1" r="1.0"/>
<ellipse cx="903.0" cy="455.0" rx="1.6" ry="1.3"/>
<circle cx="903.0" cy="455.0" r="1.0"/>
<ellipse cx="809.1" cy="538.0" rx="1.2" ry="1.0"/>
<ellipse cx="868.3" cy="487.4" rx="1.5" ry="1.3"/>
<circle cx="868.7" cy="486.7" r="0.9"/>
<ellipse cx="816.1" cy="534.8" rx="1.6" ry="1.3"/>
<circle cx="816.4" cy="534.8" r="0.9"/>
<ellipse cx="879.4" cy="477.4" rx="1.3" ry="1.1"/>
<circle cx="880.3" cy="477.8" r="0.8"/>
<circle cx="880.3" cy="478.8" r="1.4"/>
<circle cx="878.1" cy="478.3" r="1.4"/>
<circle cx="877.5" cy="477.1" r="1.4"/>
<circle cx="879.2" cy="476.9" r="1.4"/>
<circle cx="878.5" cy="477.9" r="1.4"/>
<circle cx="880.4" cy="476.3" r="1.4"/>
<circle cx="880.1" cy="476.4" r="1.4"/>
<ellipse cx="817.9" cy="528.8" rx="1.6" ry="1.3"/>
<circle cx="818.9" cy="528.2" r="0.9"/>
<ellipse cx="807.0" cy="545.1" rx="1.1" ry="0.9"/>
<ellipse cx="906.7" cy="452.0" rx="1.3" ry="1.0"/>
<ellipse cx="843.4" cy="510.5" rx="1.1" ry="0.9"/>
<ellipse cx="826.0" cy="524.4" rx="1.1" ry="0.9"/>
<ellipse cx="822.6" cy="527.4" rx="1.1" ry="0.9"/>
<ellipse cx="806.1" cy="538.3" rx="1.1" ry="0.9"/>
<ellipse cx="811.4" cy="541.1" rx="1.4" ry="1.2"/>
<circle cx="811.7" cy="541.3" r="0.8"/>
<ellipse cx="869.1" cy="483.8" rx="1.3" ry="1.1"/>
<circle cx="868.1" cy="484.0" r="0.8"/>
<ellipse cx="860.5" cy="489.7" rx="1.3" ry="1.1"/>
<circle cx="860.1" cy="490.0" r="0.8"/>
<ellipse cx="873.1" cy="483.0" rx="1.2" ry="1.0"/>
<ellipse cx="841.3" cy="512.6" rx="1.5" ry="1.2"/>
<circle cx="841.4" cy="513.2" r="0.9"/>
<ellipse cx="809.4" cy="532.9" rx="1.4" ry="1.1"/>
<circle cx="809.0" cy="533.1" r="0.8"/>
<ellipse cx="796.2" cy="540.8" rx="1.1" ry="0.9"/>
<ellipse cx="797.8" cy="543.3" rx="1.5" ry="1.2"/>
<circle cx="797.9" cy="544.2" r="0.9"/>
<ellipse cx="808.1" cy="505.1" rx="1.1" ry="0.9"/>
<ellipse cx="808.5" cy="530.3" rx="1.3" ry="1.1"/>
<circle cx="809.2" cy="531.3" r="0.8"/>
<ellipse cx="819.8" cy="526.2" rx="1.4" ry="1.2"/>
<circle cx="819.8" cy="526.9" r="0.9"/>
<ellipse cx="818.9" cy="508.1" rx="1.5" ry="1.2"/>
<circle cx="818.0" cy="507.9" r="0.9"/>
<ellipse cx="816.3" cy="543.9" rx="1.1" ry="0.9"/>
<ellipse cx="968.0" cy="92.5" rx="1.7" ry="1.4"/>
<circle cx="967.2" cy="92.3" r="1.0"/>
</g>
<g fill="#77729a">
<polygon points="629,226 653,227 647,236 701,291.6 643,349 634,362 633,380 636,384 648,400 720,456 806,391 817,373 1044,146 1044,200 687,557 606,557 543,493 527,480 510,484 476,452 629,452"/>
</g>
<g fill="#b7a4a3">
<path d="M652,234 L806,385 Q812,392 804,398 L734,449 Q722,456 708,450 L650,401 L637,386 Q630,372 637,358 L643,349 L701,291.6 L643,237 Z"/>
<path d="M549.5,452 L557.8,480 L615,529 Q632,544 652,542 Q660,540 668,531 L694,505 Q701,496 699,482 Q696,470 688,465 L629,417 L629,452 Z"/>
</g>
<polygon fill="#77729a" points="652,229 707,280 800,367 817,373 815,390 794,374 700,281 648,234"/>
<g stroke="#bdb9d6" stroke-width="1" fill="none" opacity="0.9">
<line x1="1100" y1="96.5" x2="560" y2="636.5"/>
<line x1="1100" y1="135.6" x2="560" y2="675.6"/>
<line x1="1100" y1="117" x2="560" y2="657" stroke-dasharray="19 11"/>
</g>
<g fill="#5b5686">
<polygon points="466,513 477,524 466,535 455,524"/>
<polygon points="436,543 445,552 436,561 427,552"/>
<polygon points="521,106.6 535,89.2 544.8,98.2 553,95.4 557.4,101 550.4,106.6"/>
</g>
<g fill="none" stroke="#8e8088" stroke-width="0.7">
<path d="M234,276 Q300,300 360,372"/>
<path d="M68,240 L68,182 Q68,168 82,168 L262,168 Q271,168 271,158 L271,98 Q271,86 284,86 L338,86"/>
<path d="M686,27 L690,72 Q692,80 700,79 L740,77 Q762,78 764,100 L771,150 L780,170"/>
<path d="M929,17 L780,170"/>
</g>
<g fill="none" stroke="#7d1c42" stroke-linecap="round" stroke-linejoin="round">
<path d="M22,14 L2,108" stroke-width="5"/>
<path d="M-5,185 L70,204 L380,207" stroke-width="10"/>
<path d="M74,240 L74,184 Q74,174 84,174 L266,174 Q277,174 277,163 L277,102 Q277,92 287,92 L338,92 L362,97 L420,97 Q430,97 430,87 L430,50 Q430,40 440,39 L640,18 L700,10" stroke-width="5.5"/>
<path d="M672,10 L681,75 Q683,87 696,86 L736,83.5 Q752,84 756,98 L763,150 L781,182" stroke-width="5.5"/>
<path d="M600,134 L714,237 Q720,242 728,235 L960,0" stroke-width="6"/>
<path d="M205,250 L310,311 L380,382" stroke-width="5"/>
<path d="M310,311 L380,245" stroke-width="5"/>
<path d="M340,338 L380,300" stroke-width="5"/>
<path d="M510,111 C523,87 533,81.5 542.5,81.5 C552,81.5 562,87 575,111" stroke-width="5"/>
<path d="M430,440 L474,476 Q484,486 476,496 L410,565" stroke-width="5"/>
<path d="M1010,369 L825,567" stroke-width="5"/>
</g>
<g fill="#77729a">
<polygon points="629,189 651,179 664,184 677,199.5 754.5,123 758.5,145 739.6,164 723.4,163 680,210 661,229 629,235"/>
<path d="M653,187 L677,163" stroke="#77729a" stroke-width="10"/>
<polygon points="669,162 677,155 683,161 679,167"/>
</g>
<g fill="#5b5686">
<polygon points="629,197 636,197 643,204 643,212 636,217 629,217"/>
<polygon points="631,222 638,217 646,224 646,230 631,230"/>
<polygon points="648,214 659,202 664,206 653,218"/>
<polygon points="684,163 697,151 702,156 700,160 690,170"/>
<circle cx="685" cy="167" r="3.2"/>
<polygon points="748,137 751,134 757,142 754,145"/>
<path d="M743,155 L751,148" stroke="#5b5686" stroke-width="1.2"/>
<polygon points="649,176 653,173 655,176 651,179"/>
<rect x="756" y="175" width="2.5" height="2.5"/><rect x="759" y="177.5" width="2.5" height="2.5"/><rect x="762" y="180" width="2.5" height="2.5"/>
</g>
<polygon points="318,308 335,294 357,315 341,335" fill="#c08c6c"/>
<g fill="#3c3f86"><circle cx="333" cy="301" r="3"/><circle cx="325" cy="312" r="3"/><rect x="337" y="306" width="3" height="1.5"/><rect x="333" y="316" width="3" height="1.5"/><rect x="343" y="325" width="3" height="3"/></g>
<g fill="none" stroke="#3076c4" stroke-linecap="butt">
<path d="M57,10 L52,128 Q50,145 46,165 L37,196 L18,262" stroke-width="8.5" stroke-linejoin="round"/>
<path d="M126,10 L53,126 L51,140" stroke-width="8.5" stroke-linejoin="round"/>
</g>
<polygon points="20,189 51,197 49,210 18,203" fill="#5b5488"/>
<ellipse cx="24" cy="194" rx="2.2" ry="7" fill="#7a74b0" opacity="0.75"/>
<ellipse cx="49" cy="203" rx="2.2" ry="7" fill="#7a74b0" opacity="0.75"/>
<g fill="none" stroke="#3a3a80" stroke-width="0.8"><rect x="78.5" y="193.5" width="22" height="7.5" transform="rotate(3 89 197)"/><rect x="77.5" y="213.5" width="22" height="7.5" transform="rotate(3 88 217)"/></g>
<g fill="#3a3a90"><rect x="80" y="195" width="3" height="4"/><rect x="96" y="196" width="3" height="4"/><rect x="79" y="215" width="3" height="4"/><rect x="95" y="216" width="3" height="4"/></g>
<g fill="none" stroke="#3a3552" stroke-width="0.7" opacity="0.8">
<circle cx="740" cy="381" r="123"/>
<circle cx="700" cy="395" r="176"/>
<circle cx="741" cy="368" r="79"/>
<circle cx="586" cy="521" r="86"/>
<circle cx="600" cy="400" r="132"/>
<circle cx="670" cy="440" r="126"/>
<circle cx="565" cy="122" r="121"/>
<circle cx="696" cy="346" r="126"/>
<circle cx="744" cy="400" r="139"/>
<circle cx="717" cy="383" r="80"/>
</g>
<line x1="0" y1="93.5" x2="1000" y2="93.5" stroke="#433862" stroke-width="1.5"/>
<line x1="465.5" y1="0" x2="465.5" y2="562" stroke="#433862" stroke-width="1.5"/>
<g fill="none" stroke="#4a72b8" stroke-width="1">
<rect x="286" y="119" width="18" height="6" transform="rotate(0 295 122)"/>
<rect x="286" y="124" width="18" height="6" transform="rotate(-5 295 127)"/>
<rect x="286" y="128" width="18" height="6" transform="rotate(0 295 131)"/>
<rect x="286" y="133" width="18" height="6" transform="rotate(5 295 136)"/>
<rect x="286" y="138" width="18" height="6" transform="rotate(0 295 141)"/>
<rect x="286" y="143" width="18" height="6" transform="rotate(-10 295 146)"/>
<rect x="286" y="153" width="18" height="6" transform="rotate(-30 295 156)"/>
<rect x="286" y="159" width="18" height="6" transform="rotate(-20 295 162)"/>
<rect x="286" y="164" width="18" height="6" transform="rotate(0 295 167)"/>
<rect x="286" y="173" width="18" height="6" transform="rotate(0 295 176)"/>
<rect x="286" y="178" width="18" height="6" transform="rotate(0 295 181)"/>
<rect x="286" y="183" width="18" height="6" transform="rotate(0 295 186)"/>
<rect x="286" y="188" width="18" height="6" transform="rotate(0 295 191)"/>
</g>
<g fill="none" stroke="#2050a4" stroke-width="1.5">
<rect x="680" y="325" width="8" height="6" rx="2" transform="rotate(-40 684 328)"/>
<path d="M694.4,349 L694.4,342 Q697.4,338 700.4,342 L700.4,349 Z" transform="rotate(-20 697.4 344)"/>
<path d="M750.5,361 L750.5,354 Q753.5,350 756.5,354 L756.5,361 Z" transform="rotate(-20 753.5 356)"/>
<circle cx="722" cy="366.8" r="1.6"/><circle cx="726.5" cy="368.8" r="1.6"/><path d="M723.6,367.6 L725,368.2"/>
<circle cx="789" cy="381.5" r="1.6"/><circle cx="793.5" cy="383.5" r="1.6"/><path d="M790.6,382.3 L792,382.9"/>
<path d="M734.5,389 L734.5,382 Q737.5,378 740.5,382 L740.5,389 Z" transform="rotate(-20 737.5 384)"/>
<rect x="745.5" y="382.5" width="8" height="6" rx="2" transform="rotate(-40 749.5 385.5)"/>
<circle cx="769" cy="398.8" r="1.6"/><circle cx="773.5" cy="400.8" r="1.6"/><path d="M770.6,399.6 L772,400.2"/>
<circle cx="691.4" cy="408.2" r="1.6"/><circle cx="695.9" cy="410.2" r="1.6"/><path d="M693.0,409.0 L694.4,409.59999999999997"/>
<rect x="740" y="403.8" width="8" height="6" rx="2" transform="rotate(-40 744 406.8)"/>
<circle cx="747.5" cy="417.5" r="1.6"/><circle cx="752.0" cy="419.5" r="1.6"/><path d="M749.1,418.3 L750.5,418.9"/>
<rect x="729.8" y="425.2" width="10" height="5" rx="1"/>
<rect x="711" y="428.4" width="10" height="5" rx="1"/>
<rect x="709.8" y="433.7" width="10" height="5" rx="1"/>
<path d="M665,455 L665,448 Q668,444 671,448 L671,455 Z" transform="rotate(-20 668 450)"/>
<circle cx="636" cy="442" r="1.6"/><circle cx="640.5" cy="444" r="1.6"/><path d="M637.6,442.8 L639,443.4"/>
<path d="M671,453.3 L671,446.3 Q674,442.3 677,446.3 L677,453.3 Z" transform="rotate(-20 674 448.3)"/>
<rect x="661.4" y="456.7" width="8" height="6" rx="2" transform="rotate(-40 665.4 459.7)"/>
<circle cx="693.3" cy="470.5" r="1.6"/><circle cx="697.8" cy="472.5" r="1.6"/><path d="M694.9,471.3 L696.3,471.9"/>
<circle cx="692" cy="408" r="1.6"/><circle cx="696.5" cy="410" r="1.6"/><path d="M693.6,408.8 L695,409.4"/>
<circle cx="618" cy="464.8" r="1.6"/><circle cx="622.5" cy="466.8" r="1.6"/><path d="M619.6,465.6 L621,466.2"/>
<circle cx="602.2" cy="472.5" r="1.6"/><circle cx="606.7" cy="474.5" r="1.6"/><path d="M603.8000000000001,473.3 L605.2,473.9"/>
<circle cx="650.6" cy="477.4" r="1.6"/><circle cx="655.1" cy="479.4" r="1.6"/><path d="M652.2,478.2 L653.6,478.79999999999995"/>
<circle cx="585" cy="472.5" r="1.6"/><circle cx="589.5" cy="474.5" r="1.6"/><path d="M586.6,473.3 L588,473.9"/>
<circle cx="585" cy="486.8" r="1.6"/><circle cx="589.5" cy="488.8" r="1.6"/><path d="M586.6,487.6 L588,488.2"/>
<circle cx="598" cy="499.6" r="1.6"/><circle cx="602.5" cy="501.6" r="1.6"/><path d="M599.6,500.40000000000003 L601,501.0"/>
<circle cx="599" cy="502.4" r="1.6"/><circle cx="603.5" cy="504.4" r="1.6"/><path d="M600.6,503.2 L602,503.79999999999995"/>
<rect x="621.5" y="502.3" width="8" height="6" rx="2" transform="rotate(-40 625.5 505.3)"/>
<rect x="613.4" y="507.0" width="10" height="5" rx="1"/>
<rect x="613" y="515" width="8" height="6" rx="2" transform="rotate(-40 617 518)"/>
<circle cx="643.5" cy="523.8" r="1.6"/><circle cx="648.0" cy="525.8" r="1.6"/><path d="M645.1,524.5999999999999 L646.5,525.1999999999999"/>
<path d="M619.7,536 L619.7,529 Q622.7,525 625.7,529 L625.7,536 Z" transform="rotate(-20 622.7 531)"/>
<path d="M733,389 L733,382 Q736,378 739,382 L739,389 Z" transform="rotate(-20 736 384)"/>
<path d="M484,540 L484,533 Q487,529 490,533 L490,540 Z" transform="rotate(-20 487 535)"/>
</g>
<g fill="#22b040">
<rect x="291.2" y="113.6" width="16" height="2.2"/>
<rect x="286.4" y="117.9" width="16" height="2.2"/>
<rect x="299.2" y="120.5" width="15.2" height="2.2"/>
<rect x="288.8" y="124.8" width="15.2" height="2.2"/>
<rect x="288.8" y="128.8" width="15.2" height="2.2"/>
<rect x="288.8" y="133.6" width="15.2" height="2.2"/>
<rect x="293.6" y="142.1" width="16" height="2.2"/>
<rect x="297.6" y="151.2" width="15.2" height="2.2"/>
<rect x="288.8" y="153.6" width="17.6" height="2.2"/>
<rect x="287.2" y="158.9" width="14.4" height="2.2"/>
<rect x="286.4" y="168.0" width="14.4" height="2.2"/>
<rect x="286.4" y="172.0" width="14.4" height="2.2"/>
<rect x="285.6" y="177.6" width="15.2" height="2.2"/>
<rect x="302.4" y="178.4" width="15.2" height="2.2"/>
<rect x="285.6" y="182.4" width="15.2" height="2.2"/>
<rect x="712.0" y="310.7" width="16" height="2.2"/>
<rect x="709.0" y="312.8" width="24" height="2.2"/>
<rect x="708.0" y="316.6" width="24" height="2.2"/>
<rect x="677.0" y="319.0" width="16" height="2.2"/>
<rect x="688.0" y="334.7" width="16" height="2.2"/>
<rect x="745.0" y="349.4" width="16" height="2.2"/>
<rect x="717.0" y="359.3" width="16" height="2.2"/>
<rect x="782.0" y="373.0" width="16" height="2.2"/>
<rect x="731.0" y="375.3" width="16" height="2.2"/>
<rect x="745.5" y="378.0" width="16" height="2.2"/>
<rect x="763.0" y="391.3" width="20" height="2.2"/>
<rect x="685.0" y="400.4" width="16" height="2.2"/>
<rect x="739.0" y="396.0" width="16" height="2.2"/>
<rect x="737.5" y="404.0" width="16" height="2.2"/>
<rect x="753.5" y="401.5" width="16" height="2.2"/>
<rect x="740.0" y="412.0" width="16" height="2.2"/>
<rect x="708.0" y="417.5" width="16" height="2.2"/>
<rect x="731.0" y="419.7" width="16" height="2.2"/>
<rect x="709.0" y="423.4" width="16" height="2.2"/>
<rect x="706.7" y="428.2" width="16" height="2.2"/>
<rect x="742.8" y="421.5" width="16" height="2.2"/>
<rect x="666.7" y="443.4" width="15" height="2.2"/>
<rect x="628.0" y="400.0" width="6" height="2.2"/>
<rect x="628.0" y="434.7" width="17" height="2.2"/>
<rect x="665.0" y="443.2" width="17" height="2.2"/>
<rect x="661.0" y="453.2" width="16" height="2.2"/>
<rect x="688.0" y="462.6" width="15" height="2.2"/>
<rect x="685.0" y="400.5" width="17" height="2.2"/>
<rect x="611.0" y="457.4" width="16" height="2.2"/>
<rect x="597.0" y="463.4" width="14" height="2.2"/>
<rect x="580.0" y="465.4" width="14" height="2.2"/>
<rect x="645.5" y="469.4" width="14" height="2.2"/>
<rect x="667.0" y="469.4" width="15" height="2.2"/>
<rect x="580.0" y="478.2" width="15" height="2.2"/>
<rect x="591.4" y="486.8" width="14" height="2.2"/>
<rect x="594.0" y="494.0" width="16" height="2.2"/>
<rect x="611.0" y="496.0" width="16" height="2.2"/>
<rect x="614.0" y="501.0" width="16" height="2.2"/>
<rect x="611.0" y="511.5" width="16" height="2.2"/>
<rect x="615.6" y="522.4" width="17" height="2.2"/>
<rect x="638.4" y="516.7" width="16" height="2.2"/>
<rect x="486.0" y="527.0" width="15" height="2.2"/>
</g>
<g font-family="Liberation Sans" font-size="9" letter-spacing="0.6" fill="#e4e2f8" stroke="#5a58a0" stroke-width="1.2" paint-order="stroke">
<text x="312" y="123.8">M939</text>
<text x="316.8" y="131">M1043</text>
<text x="306" y="135">M939</text>
<text x="306" y="139.8">M939</text>
<text x="307" y="144.6">M939</text>
<text x="310.4" y="153.4">M1043</text>
<text x="307" y="162.2">M1043</text>
<text x="304" y="168.6">M1043</text>
<text x="302.4" y="176.6">M939</text>
<text x="302.4" y="181.4">M939</text>
<text x="304" y="189.4">M1043</text>
<text x="302.4" y="193.4">M939</text>
<text x="671.9" y="329.7">1</text>
<text x="693.4" y="329.7">M2492</text>
<text x="724" y="325.7">Inf.M4</text>
<text x="728" y="321.7">M243</text>
<text x="705" y="345.2">M939</text>
<text x="761.5" y="360">Inf.M8</text>
<text x="733.4" y="369.8">Inf.M4</text>
<text x="799" y="383.7">M249</text>
<text x="748" y="385.8">M939</text>
<text x="763" y="388.5">Inf.M4</text>
<text x="757.5" y="401.8">1</text>
<text x="777.5" y="401.8">NofM4</text>
<text x="702.7" y="411.2">Inf.M4</text>
<text x="733.3" y="412.5">1</text>
<text x="755" y="407">M2A2</text>
<text x="785" y="412.5">M4</text>
<text x="752" y="412.5">M2A2</text>
<text x="757.5" y="422.7">M249</text>
<text x="724" y="428.5">M978</text>
<text x="755" y="432.5">M2A2</text>
<text x="722.8" y="438.7">M1043</text>
<text x="662.7" y="445">M4</text>
<text x="682.7" y="452.6">M939</text>
<text x="631" y="401.5">f.M4</text>
<text x="637" y="411">M249</text>
<text x="630" y="414.3">M249</text>
<text x="631" y="431.4">M4</text>
<text x="635.5" y="440">M978</text>
<text x="647" y="445">Inf.M4</text>
<text x="682.5" y="453.6">M939</text>
<text x="676.8" y="463.3">M939</text>
<text x="704" y="473.2">Inf.M4</text>
<text x="702.4" y="411">Inf.M4</text>
<text x="628.4" y="467.8">M249</text>
<text x="610" y="474.7">M1043</text>
<text x="662.6" y="479.8">M249nf.M4</text>
<text x="597" y="488.9">f.M4</text>
<text x="611" y="497.4">M4</text>
<text x="630" y="506">M2A2</text>
<text x="631" y="511.7">M1043</text>
<text x="605.5" y="522.5">1</text>
<text x="627" y="522.5">M2A2</text>
<text x="654" y="527.3">Inf.M4</text>
<text x="632.7" y="532.5">M939</text>
<text x="473.5" y="538">1</text>
<text x="497" y="538">M2A2</text>
</g>
<text x="637" y="264" font-family="Liberation Sans" font-size="7.5" fill="#3a38a0">10</text>
<circle cx="847" cy="370" r="5" fill="#141428"/><line x1="843.5" y1="373.5" x2="850.5" y2="366.5" stroke="#e8d020" stroke-width="1.6"/>
<text x="855" y="373" font-family="Liberation Sans" font-size="9" letter-spacing="0.3" fill="#e2dfff" stroke="#55539a" stroke-width="1.3" paint-order="stroke">Hatay</text>
<circle cx="997" cy="330" r="5" fill="#3a4a7a"/>
</g></svg>

<div id="top">
<svg style="position:absolute;left:0;top:0" width="994" height="17" viewBox="0 0 994 17">
<g fill="#1c2937"><rect x="202" y="1" width="12.5" height="15" rx="1.5"/><rect x="346.3" y="1" width="12.6" height="15" rx="1.5"/><rect x="362.5" y="1" width="11.7" height="15" rx="1.5"/><rect x="490.3" y="1" width="11.7" height="15" rx="1.5"/><rect x="505.6" y="1" width="12.6" height="15" rx="1.5"/><rect x="537.5" y="1" width="32.5" height="15" rx="1.5" fill="#22384a"/></g>
<g fill="none" stroke="#3a9cc4" stroke-width="1.1" stroke-linecap="round" stroke-linejoin="round">
<path d="M172,12 L175,9 L178,9.5 L181,5"/>
<path d="M187.5,9 L196.5,4.5 L192,13 L191.5,9.5 Z"/>
<rect x="204.5" y="6.5" width="7.5" height="4" rx="0.5"/>
<circle cx="224" cy="8.5" r="4.2"/>
<circle cx="239" cy="8" r="4"/><rect x="239.5" y="8.5" width="5.5" height="4.5" rx="1"/>
<path d="M268,11 L278,11 M270,8.5 L276,8.5 M271,6 L273,6" stroke="#2d7090"/>
<circle cx="285" cy="4.5" r="1.5"/><circle cx="291.5" cy="4.5" r="1.5"/><circle cx="288.3" cy="12.5" r="1.5"/><path d="M285.7,6 L288,11 L291,6"/>
<circle cx="303.6" cy="8.5" r="3.6"/><path d="M303.6,3 L303.6,5 M303.6,12 L303.6,14 M298,8.5 L300,8.5 M307.2,8.5 L309.2,8.5"/>
<path d="M315.5,7.5 Q320,3 324.5,7.5 M317,9.5 Q320,6.5 323,9.5"/><circle cx="320" cy="11.5" r="0.8" fill="#3a9cc4"/>
<path d="M333,3 Q335,1.5 337,3 M335,4 L333.5,14 L336.5,14 Z"/>
<circle cx="352" cy="8" r="4"/><path d="M353,11 L356,13"/>
<circle cx="368" cy="8" r="4"/><path d="M369,11 L372,13"/>
<circle cx="384" cy="8" r="4"/><rect x="384.5" y="9.5" width="3" height="3"/>
<path d="M400.3,3.5 L400.3,13.5 M395.3,8.5 L405.3,8.5 M398.8,5 L400.3,3.5 L401.8,5 M398.8,12 L400.3,13.5 L401.8,12 M396.8,7 L395.3,8.5 L396.8,10 M403.8,7 L405.3,8.5 L403.8,10"/>
<circle cx="415.5" cy="7.5" r="3.3"/><path d="M418,10 L420.5,12.5 M414,7.5 L417,7.5 M415.5,6 L415.5,9"/>
<circle cx="431" cy="7.5" r="3.3"/><path d="M433.5,10 L436,12.5 M429.5,7.5 L432.5,7.5"/>
<circle cx="447" cy="7.5" r="3.3"/><path d="M449.5,10 L452,12.5 M447,6 L447,9"/>
<circle cx="464.2" cy="8.5" r="4.5"/><circle cx="464.2" cy="8.5" r="2.5"/><circle cx="464.2" cy="8.5" r="0.8"/><path d="M464.2,8.5 L470,2.5"/>
<circle cx="479.5" cy="8.5" r="4.3"/><path d="M475.2,8.5 L483.8,8.5 M479.5,4.2 L479.5,12.8 M476,6 L483,6 M476,11 L483,11"/>
<path d="M492.5,4.5 L499.5,4.5 M492.5,7 L499.5,7 M492.5,9.5 L499.5,9.5 M492.5,12 L499.5,12 M493.5,3.5 L493.5,13 M496,3.5 L496,13 M498.5,3.5 L498.5,13"/>
<path d="M508.5,13 L509,10.5 L515,4.5 L516.5,6 L510.5,12 Z" fill="#3a9cc4"/>
</g></svg>
<div class="tb" style="left:5px;color:#5fb7d8">MAP</div>
<div class="tb" style="left:38px;color:#5fb7d8">37 S BA 55832 27749, 70 m</div>
<div class="tb" style="left:537.5px;top:1px;width:32.5px;height:15px;text-align:center;line-height:15px;color:#5fb7d8;font-size:7px">m=&gt;ft</div>
<div style="position:absolute;right:2px;top:1px;color:#e0e0e0;font-size:7px;line-height:7px;text-align:right">07:33:50<br>01/06/2020</div>
</div>
<div class="btn" style="top:19px">Map</div>
<div class="btn" style="top:34px;color:#5cc6ea;border:1px solid #46627e">Alt</div>
<div class="btn" style="top:49px">Sat</div>

<!-- Hatay panel -->
<div class="panel" style="left:10px;top:235px;width:224px;height:314px">
<div style="position:absolute;left:0;top:0;width:224px;height:14px;border-bottom:1px solid #27374a"></div>
<div style="position:absolute;left:7px;top:3px;font-size:8px;font-weight:bold;color:#5cc6ea">Hatay</div>
<div style="position:absolute;left:209px;top:2px;font-size:9px;color:#7a8ea0">×</div>
<div class="lbl" style="top:21.5px">ICAO</div>
<div class="inp" style="left:98px;top:19.0px;width:118px">LTDA</div>
<div class="lbl" style="top:41.1px">COALITION</div>
<div class="inp" style="left:98px;top:38.6px;width:118px">BLUE</div>
<div class="lbl" style="top:60.8px">ELEVATION</div>
<div class="inp" style="left:98px;top:58.3px;width:118px">69 m</div>
<div class="lbl" style="top:80.4px">RWY Length</div>
<div class="inp" style="left:98px;top:77.9px;width:118px">2759 m</div>
<div class="lbl" style="top:100.1px">COORDINATES</div>
<div class="inp" style="left:98px;top:97.6px;width:118px">37 S BA 57602 28519</div>
<div class="lbl" style="top:119.7px">TACAN</div>
<div class="inp" style="left:98px;top:117.2px;width:118px">--</div>
<div class="lbl" style="top:139.3px">VOR</div>
<div class="inp" style="left:98px;top:136.8px;width:118px">112.05 (HTY)</div>
<div class="lbl" style="top:159.0px">RSBN</div>
<div class="inp" style="left:98px;top:156.5px;width:118px">--</div>
<div class="lbl" style="top:178.6px">ATC&nbsp; (MHz, AM)</div>
<div class="inp" style="left:98px;top:176.1px;width:118px">128.500, 3.900, 38.700, 250.300</div>
<div class="lbl" style="top:198.3px">RWYs</div>
<div class="inp" style="left:98px;top:195.8px;width:55px">22</div>
<div class="inp" style="left:161px;top:195.8px;width:55px">4</div>
<div class="lbl" style="top:217.9px">ILS</div>
<div class="inp" style="left:98px;top:215.4px;width:55px">--</div>
<div class="inp" style="left:161px;top:215.4px;width:55px">108.90 (IHAT)</div>
<div class="lbl" style="top:237.5px">PRMG</div>
<div class="inp" style="left:98px;top:235.0px;width:55px">--</div>
<div class="inp" style="left:161px;top:235.0px;width:55px">--</div>
<div class="lbl" style="top:257.2px">OUTER NDB</div>
<div class="inp" style="left:98px;top:254.7px;width:55px">--</div>
<div class="inp" style="left:161px;top:254.7px;width:55px">--</div>
<div class="lbl" style="top:276.8px">INNER NDB</div>
<div class="inp" style="left:98px;top:274.3px;width:55px">--</div>
<div class="inp" style="left:161px;top:274.3px;width:55px">--</div>
<div style="position:absolute;left:98px;top:293px;width:118px;height:14px;background:linear-gradient(#8d9c99,#6f7d7b);border-radius:1px;color:#f2f2f2;font-size:6.5px;font-weight:bold;text-align:center;line-height:14px">RESOURCES</div>
</div>
<!-- Warehouse dialog -->
<div class="panel" style="left:367px;top:105px;width:262px;height:347px">
<div style="position:absolute;left:0;top:0;width:262px;height:15px;border-bottom:1px solid #27374a"></div>
<div style="position:absolute;left:8px;top:4px;font-size:7.4px;font-weight:bold;color:#5cc6ea">Warehouse State</div>
<div style="position:absolute;left:247px;top:2px;font-size:9px;color:#7a8ea0">×</div>
<div style="position:absolute;left:6px;top:22.1px;width:8px;height:8px;border-radius:50%;border:1px solid #6f8fb0;background:transparent"></div>
<div class="wl" style="left:15.5px;top:21.6px">A2A MISSILES</div>
<div style="position:absolute;left:6px;top:35.0px;width:8px;height:8px;border-radius:50%;border:1px solid #6f8fb0;background:transparent"></div>
<div class="wl" style="left:15.5px;top:34.5px">A2G MISSILES</div>
<div style="position:absolute;left:6px;top:47.9px;width:8px;height:8px;border-radius:50%;border:1px solid #6f8fb0;background:transparent"></div>
<div class="wl" style="left:15.5px;top:47.4px">ROCKETS</div>
<div style="position:absolute;left:6px;top:60.9px;width:8px;height:8px;border-radius:50%;border:1px solid #6f8fb0;background:transparent"></div>
<div class="wl" style="left:15.5px;top:60.4px">BOMBS</div>
<div style="position:absolute;left:6px;top:73.8px;width:8px;height:8px;border-radius:50%;border:1px solid #6f8fb0;background:transparent"></div>
<div class="wl" style="left:15.5px;top:73.3px">BOMBS GUIDED</div>
<div style="position:absolute;left:6px;top:86.7px;width:8px;height:8px;border-radius:50%;border:1px solid #6f8fb0;background:transparent"></div>
<div class="wl" style="left:15.5px;top:86.2px">FUEL TANKS</div>
<div style="position:absolute;left:6px;top:99.6px;width:8px;height:8px;border-radius:50%;border:1px solid #6f8fb0;background:radial-gradient(#a8d4f8 0,#8cc0ee 1.8px,#2d3d4f 2.6px)"></div>
<div class="wl" style="left:15.5px;top:99.1px">AIRCRAFT</div>
<div style="position:absolute;left:6px;top:112.5px;width:8px;height:8px;border-radius:50%;border:1px solid #6f8fb0;background:transparent"></div>
<div class="wl" style="left:15.5px;top:112.0px">MISC</div>
<div class="wl" style="left:5px;top:135.2px">JET FUEL</div>
<div class="wl" style="left:16px;top:148.0px">77.5 t</div>
<div class="wl" style="left:5px;top:161.0px">GASOLINE</div>
<div class="wl" style="left:16px;top:173.5px">100.0 t</div>
<div class="wl" style="left:5px;top:186.5px">METHANOL MIX</div>
<div class="wl" style="left:16px;top:199.5px">100.0 t</div>
<div class="wl" style="left:5px;top:212.7px">DIESEL</div>
<div class="wl" style="left:16px;top:225.3px">100.0 t</div>
<div style="position:absolute;left:86px;top:21.4px;width:173px;height:303px;background:#243242">
<div style="position:absolute;left:0;top:0;width:173px;height:9.4px;background:#6a737c"></div>
<div style="position:absolute;left:0;top:0;width:96px;height:9.4px;color:#e8e8e8;font-size:6.5px;line-height:9.4px;text-align:center">type</div>
<div style="position:absolute;left:96px;top:0;width:77px;height:9.4px;color:#e8e8e8;font-size:6.5px;line-height:9.4px;text-align:center">count</div>
<div style="position:absolute;left:0;top:9.4px;width:173px;height:9.8px;background:#24313f"></div>
<div class="tr" style="left:2.5px;top:9.4px">A-4E-C</div><div class="tr" style="left:98.5px;top:9.4px">100</div>
<div style="position:absolute;left:0;top:19.2px;width:173px;height:9.8px;background:#3b4856"></div>
<div class="tr" style="left:2.5px;top:19.2px">AH-64D BLK.II</div><div class="tr" style="left:98.5px;top:19.2px">1073741817/0</div>
<div style="position:absolute;left:0;top:29.0px;width:173px;height:9.8px;background:#24313f"></div>
<div class="tr" style="left:2.5px;top:29.0px">B-17G</div><div class="tr" style="left:98.5px;top:29.0px">100</div>
<div style="position:absolute;left:0;top:38.8px;width:173px;height:9.8px;background:#3b4856"></div>
<div class="tr" style="left:2.5px;top:38.8px">C-47</div><div class="tr" style="left:98.5px;top:38.8px">100</div>
<div style="position:absolute;left:0;top:48.6px;width:173px;height:9.8px;background:#24313f"></div>
<div class="tr" style="left:2.5px;top:48.6px">CH-47F</div><div class="tr" style="left:98.5px;top:48.6px">1073741825/0</div>
<div style="position:absolute;left:0;top:58.4px;width:173px;height:9.8px;background:#3b4856"></div>
<div class="tr" style="left:2.5px;top:58.4px">F-14B</div><div class="tr" style="left:98.5px;top:58.4px">1/0</div>
<div style="position:absolute;left:0;top:68.2px;width:173px;height:9.8px;background:#24313f"></div>
<div class="tr" style="left:2.5px;top:68.2px">F-16CM bl.50</div><div class="tr" style="left:98.5px;top:68.2px">3/0</div>
<div style="position:absolute;left:0;top:78.0px;width:173px;height:9.8px;background:#3b4856"></div>
<div class="tr" style="left:2.5px;top:78.0px">F-4E-45MC</div><div class="tr" style="left:98.5px;top:78.0px">2/0</div>
<div style="position:absolute;left:0;top:87.8px;width:173px;height:9.8px;background:#24313f"></div>
<div class="tr" style="left:2.5px;top:87.8px">Hercules</div><div class="tr" style="left:98.5px;top:87.8px">100</div>
<div style="position:absolute;left:0;top:97.6px;width:173px;height:9.8px;background:#3b4856"></div>
<div class="tr" style="left:2.5px;top:97.6px">Ju 88 A-4</div><div class="tr" style="left:98.5px;top:97.6px">100</div>
<div style="position:absolute;left:0;top:107.4px;width:173px;height:9.8px;background:#24313f"></div>
<div class="tr" style="left:2.5px;top:107.4px">KC-130J</div><div class="tr" style="left:98.5px;top:107.4px">100</div>
<div style="position:absolute;left:0;top:117.2px;width:173px;height:9.8px;background:#3b4856"></div>
<div class="tr" style="left:2.5px;top:117.2px">OH-58D(R)</div><div class="tr" style="left:98.5px;top:117.2px">1073741823/0</div>
<div style="position:absolute;left:0;top:127.0px;width:173px;height:9.8px;background:#24313f"></div>
<div class="tr" style="left:2.5px;top:127.0px">OH-6A</div><div class="tr" style="left:98.5px;top:127.0px">100</div>
<div style="position:absolute;left:0;top:136.8px;width:173px;height:9.8px;background:#3b4856"></div>
<div class="tr" style="left:2.5px;top:136.8px">SA342L</div><div class="tr" style="left:98.5px;top:136.8px">1073741823/0</div>
<div style="position:absolute;left:0;top:146.6px;width:173px;height:9.8px;background:#24313f"></div>
<div class="tr" style="left:2.5px;top:146.6px">T-45</div><div class="tr" style="left:98.5px;top:146.6px">100</div>
<div style="position:absolute;left:0;top:156.4px;width:173px;height:9.8px;background:#3b4856"></div>
<div class="tr" style="left:2.5px;top:156.4px">UH-1H</div><div class="tr" style="left:98.5px;top:156.4px">1073741823/0</div>
<div style="position:absolute;left:0;top:166.2px;width:173px;height:9.8px;background:#24313f"></div>
<div class="tr" style="left:2.5px;top:166.2px">UH-60L</div><div class="tr" style="left:98.5px;top:166.2px">100</div>
<div style="position:absolute;left:96px;top:9.4px;width:1px;height:293.6px;background:#1b2734"></div>
</div>
<div style="position:absolute;left:192px;top:328px;width:66px;height:14px;background:linear-gradient(#8a9590,#6c7874);border-radius:1px;color:#f0f0f0;font-size:6.5px;font-weight:bold;text-align:center;line-height:14px">OK</div>
</div>
<svg style="position:absolute;left:0;top:0" width="1000" height="562"><g fill="none" stroke="#ff0000" stroke-width="2.4" stroke-linecap="round">
<path d="M616,144.3 Q622,145.3 624,150.3 T628,158.3"/><path d="M626.5,145.8 Q620,149.3 616,156.3"/>
<path d="M616,173.7 Q622,174.7 624,179.7 T628,187.7"/><path d="M626.5,175.2 Q620,178.7 616,185.7"/>
<path d="M616,242.3 Q622,243.3 624,248.3 T628,256.3"/><path d="M626.5,243.8 Q620,247.3 616,254.3"/>
<path d="M616,261.9 Q622,262.9 624,267.9 T628,275.9"/><path d="M626.5,263.4 Q620,266.9 616,273.9"/>
<path d="M616,281.5 Q622,282.5 624,287.5 T628,295.5"/><path d="M626.5,283.0 Q620,286.5 616,293.5"/>
</g></svg>
</body></html>
